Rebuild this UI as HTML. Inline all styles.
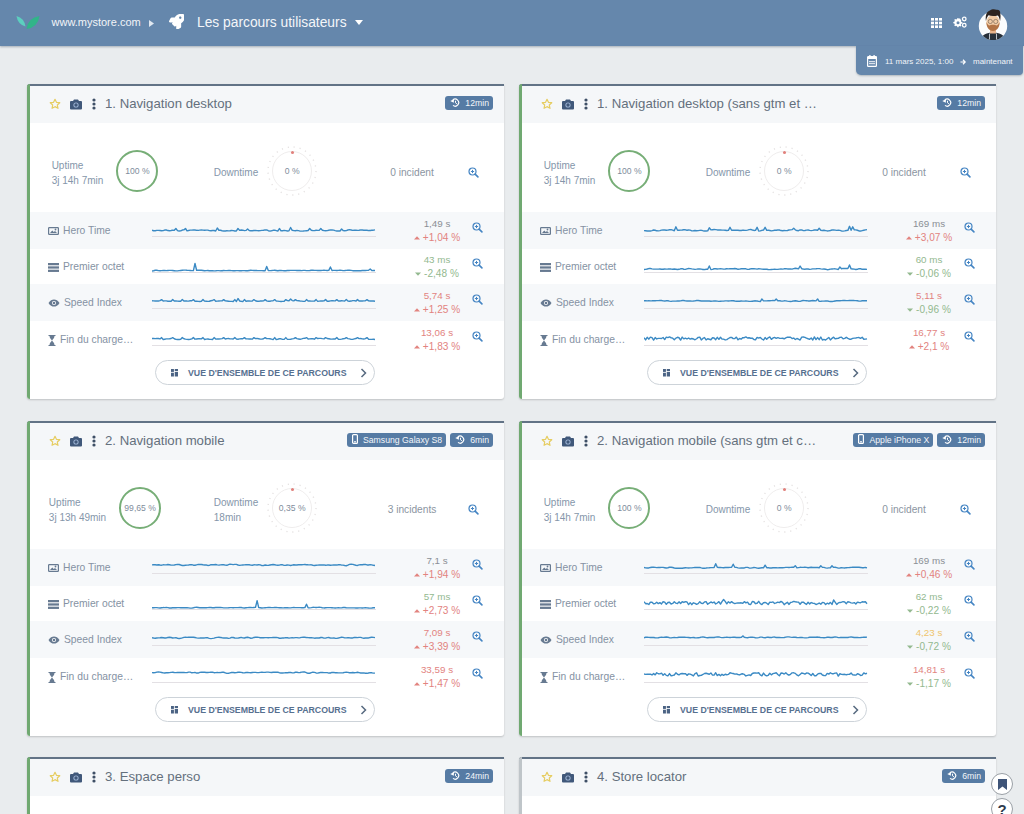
<!DOCTYPE html><html><head><meta charset="utf-8"><style>
*{margin:0;padding:0;box-sizing:border-box}
html,body{width:1024px;height:814px;overflow:hidden}
body{background:#e9ecee;font-family:"Liberation Sans", sans-serif;position:relative}
.nav{position:absolute;left:0;top:0;width:1024px;height:46px;background:#6587ac;box-shadow:0 1px 2px rgba(40,60,80,.35)}
.nav .url{position:absolute;left:51.5px;top:14px;font-size:11px;color:#f1f4f8;line-height:16px}
.nav .ntl{position:absolute;left:197px;top:12px;font-size:13.8px;color:#f4f6f9;line-height:18px}
.datep{position:absolute;left:856px;top:46px;width:167px;height:29px;background:#6587ac;border-radius:0 0 4px 5px;box-shadow:0 1px 2px rgba(40,60,80,.3)}
.datep .t{position:absolute;top:11px;font-size:8px;color:#f1f4f8;line-height:10px;white-space:nowrap}
.card{position:absolute;width:477px;height:315px;background:#fff;border-radius:3px 0 3px 3px;box-shadow:0 1px 2px rgba(0,0,0,.18);overflow:hidden}
.card>*{position:absolute}
.card>.tb{left:0;top:0;width:477px;height:2px;background:#627386;z-index:2}
.card>.lb{left:0;top:0;width:3px;height:315px;z-index:3}
.hdr{left:0;top:2px;width:477px;height:37px;background:#f5f7f9}
.hdr>*{position:absolute}
.hdr>.ctl{left:78px;top:10px;font-size:13.2px;color:#64707d;line-height:16px;white-space:nowrap}
.hdr>.bdgs{right:11px;top:10px;display:flex;gap:4px}
.bdg{display:inline-block;height:14px;line-height:14px;padding:0 4px 0 5px;background:#567ba4;color:#f3f6fa;font-size:8.7px;border-radius:3px;white-space:nowrap}
.grp{top:42px;width:300px;height:90px;display:flex;justify-content:center;align-items:center;gap:13px}
.lbl{font-size:10px;line-height:15px;color:#8596aa;white-space:nowrap;position:relative;top:1.5px}
.ring{position:relative;width:42px;height:42px;border-radius:50%;display:flex;align-items:center;justify-content:center}
.ring span{font-size:8.6px;color:#7f8d9c;white-space:nowrap;position:relative}
.ring.up{border:2px solid #77ae77}
.ring.dn{width:40px;height:40px;border:1px solid #efeded}
.ring.dn i{position:absolute;left:18px;top:-1.5px;width:3px;height:3px;border-radius:50%;background:#e1807c}
.inc{left:300px;top:43.5px;width:170px;height:90px;line-height:90px;text-align:center;font-size:10.2px;color:#8b95a1}
.zi{left:438px;width:11px;height:11px}
.zi svg{display:block}
.row{left:0;width:477px}
.row>*{position:absolute}
.mi{left:21px;top:13px;width:12px;height:11px;display:flex;align-items:center;justify-content:center}
.mi svg{display:block}
.ml{left:20.5px;top:13px;font-size:10.3px;line-height:12px;color:#8592a3;white-space:nowrap;display:flex;align-items:center}
.ml svg{display:block;margin-right:4.5px}
.sp{left:125px;top:9px}
.val{left:340px;width:140px;text-align:center;top:6px;font-size:9.8px;line-height:12px}
.chg{left:340px;width:140px;text-align:center;top:20px;font-size:10.1px;line-height:12px}
.chg .ar{font-size:6px;vertical-align:1px;margin-right:4px}
.row .zi{left:445px}
.btn{left:128px;top:276px;width:220px;height:25px;border:1px solid #cdd3d9;border-radius:13px;background:#fff}
.btn>*{position:absolute}
.bi{left:14.5px;top:8px;line-height:0}
.bt{left:32px;top:6px;font-size:8.75px;font-weight:bold;color:#56708f;line-height:12px;white-space:nowrap}
.bc{left:204px;top:7px;line-height:0}
.fab{position:absolute;left:991px;width:22px;height:22px;border-radius:50%;background:#fff;border:1px solid #9aa0a6;display:flex;align-items:center;justify-content:center}
</style></head><body>

<div class="nav">
 <svg style="position:absolute;left:16px;top:15px" width="24" height="15" viewBox="0 0 24 15"><path d="M0.5 1Q1.6 9.2 9.5 11.5Q8.4 3.3 0.5 1z" fill="#5ccfbf"/><path d="M10.5 14Q21.9 12.4 23.5 1Q12 2.6 10.5 14z" fill="#31b489"/></svg>
 <div class="url">www.mystore.com</div>
 <svg style="position:absolute;left:149px;top:19.5px" width="5" height="7" viewBox="0 0 5 7"><path d="M0 0L5 3.5 0 7z" fill="#dfe7f0"/></svg>
 <svg style="position:absolute;left:168.5px;top:13.5px" width="15" height="15" viewBox="0 0 512 512"><path fill="#fff" d="M505 19c-2-8-9-15-17-17C455-5 430-5 405-5 303-5 241 50 196 117H94c-16 0-35 11-42 26L3 241c-2 4-3 9-3 13 0 18 14 32 32 32h102l-22 22c-11 11-13 31 0 44l68 68c11 11 30 12 44 0l22-22v102c0 18 14 32 32 32 4 0 9-1 13-3l98-49c14-7 26-26 26-42V315c67-45 122-107 122-209 0-25 0-50-7-87zM384 168c-22 0-40-18-40-40s18-40 40-40 40 18 40 40-18 40-40 40z"/></svg>
 <div class="ntl" style="position:absolute;left:197px;top:13.5px;font-size:13.8px;color:#f4f6f9;line-height:18px">Les parcours utilisateurs</div>
 <svg style="position:absolute;left:355px;top:20px" width="8" height="5" viewBox="0 0 8 5"><path d="M0 0H8L4 5z" fill="#fff"/></svg>
 <svg style="position:absolute;left:931px;top:17.5px" width="11" height="10" viewBox="0 0 11 10"><g fill="#fff"><rect x="0" y="0" width="3" height="2.6"/><rect x="4" y="0" width="3" height="2.6"/><rect x="8" y="0" width="3" height="2.6"/><rect x="0" y="3.7" width="3" height="2.6"/><rect x="4" y="3.7" width="3" height="2.6"/><rect x="8" y="3.7" width="3" height="2.6"/><rect x="0" y="7.4" width="3" height="2.6"/><rect x="4" y="7.4" width="3" height="2.6"/><rect x="8" y="7.4" width="3" height="2.6"/></g></svg>
 <svg style="position:absolute;left:952.5px;top:16px" width="14" height="12" viewBox="0 0 28 24"><g fill="#fff"><path d="M9 5l2.2-.2.8 2.2 1.8 1-1 2 1 1.8 2.2.8-.2 2.2-2.2.6-.8 2 1 2-1.6 1.6-2-1-2 .8L8 22.6H5.8L5.2 20.4l-2-.8-2 1L-.4 19 .6 17l-.8-2L-2.4 14.4V12.2l2.2-.6.8-2-1-2L1.2 6l2 1 2-.8L5.8 4z" transform="translate(3 0)"/></g><circle cx="10" cy="13.3" r="3" fill="#6587ac"/><circle cx="22.5" cy="6" r="3.6" fill="none" stroke="#fff" stroke-width="2.6"/><circle cx="22.5" cy="18.5" r="3.6" fill="none" stroke="#fff" stroke-width="2.6"/></svg>
 <svg style="position:absolute;left:978px;top:6px" width="30" height="34" viewBox="0 0 30 34"><circle cx="15" cy="20" r="14.2" fill="#fbfcfd"/><clipPath id="cc"><circle cx="15" cy="20" r="14.2"/></clipPath><g clip-path="url(#cc)"><path d="M2 36c1-7 6-9.5 13-9.5s12 2.5 13 9.5z" fill="#27303a"/><path d="M11.5 27.5v6M18.5 27.5v6" stroke="#cfd6dc" stroke-width="0.9"/></g><path d="M12 22h6v5.5h-6z" fill="#e7b38b"/><ellipse cx="15" cy="16.5" rx="6.6" ry="7.6" fill="#f1cba5"/><path d="M8.4 16c0 5.5 2.7 9 6.6 9s6.6-3.5 6.6-9c-1 2.2-2 3.3-3 3.5-1.2-.9-6-.9-7.2 0-1-.2-2-1.3-3-3.5z" fill="#b27345"/><circle cx="12.3" cy="15.5" r="2.1" fill="none" stroke="#6b5a4e" stroke-width="0.6"/><circle cx="17.7" cy="15.5" r="2.1" fill="none" stroke="#6b5a4e" stroke-width="0.6"/><path d="M7.9 15c-.8-6 1-9.8 4-10.6 1.5-1.2 4.5-1.6 6.5-.6 2.5-.4 4.2 1.2 3.8 3.8.6 2 .4 4.5-.1 7.4-.6-1.8-.9-4.5-2.3-5.6-3 .9-6.8.9-9.3-.1-1.4 1.3-1.9 3.5-2.6 5.7z" fill="#2d2420"/></svg>
</div>
<div class="datep">
 <svg style="position:absolute;left:10.5px;top:9px" width="10" height="12" viewBox="0 0 20 24"><rect x="1.2" y="3.2" width="17.6" height="19.6" rx="1.5" fill="none" stroke="#fff" stroke-width="2.4"/><rect x="1" y="3" width="18" height="5" fill="#fff"/><rect x="4.5" y="0" width="2.6" height="5" fill="#fff"/><rect x="12.9" y="0" width="2.6" height="5" fill="#fff"/><g fill="#fff"><rect x="4.5" y="12" width="3" height="2.4"/><rect x="8.5" y="12" width="3" height="2.4"/><rect x="12.5" y="12" width="3" height="2.4"/><rect x="4.5" y="16" width="3" height="2.4"/><rect x="8.5" y="16" width="3" height="2.4"/><rect x="12.5" y="16" width="3" height="2.4"/></g></svg>
 <div class="t" style="left:29px">11 mars 2025, 1:00</div>
 <svg style="position:absolute;left:104px;top:12.5px" width="6" height="6" viewBox="0 0 12 12"><path d="M1 6h9M6 1.5L10.5 6 6 10.5" fill="none" stroke="#fff" stroke-width="2.4"/></svg>
 <div class="t" style="left:117px">maintenant</div>
</div>

<div class="card" style="left:27px;top:84px"><div class="tb"></div><div class="lb" style="background:#70a971"></div>
<div class="hdr"><svg width="12" height="12" viewBox="0 0 24 24" style="position:absolute;left:22px;top:11.5px"><path d="M12 2.5l2.9 6.2 6.6.7-4.9 4.6 1.4 6.6L12 17.3l-5.9 3.3 1.3-6.6-4.9-4.6 6.7-.7z" fill="none" stroke="#e6cd62" stroke-width="2.4" stroke-linejoin="round"/></svg><svg width="12" height="11" viewBox="0 0 24 22" style="position:absolute;left:43px;top:12.5px"><path d="M8 1h8l2 3h4a2 2 0 0 1 2 2v13a2 2 0 0 1-2 2H2a2 2 0 0 1-2-2V6a2 2 0 0 1 2-2h4z" fill="#40587a"/><circle cx="12" cy="12" r="5.2" fill="#9fb6d6"/><circle cx="12" cy="12" r="3.4" fill="#40587a"/></svg><svg width="4" height="12" viewBox="0 0 4 12" style="position:absolute;left:64.5px;top:11.5px"><circle cx="2" cy="2" r="1.6" fill="#3e4f66"/><circle cx="2" cy="6" r="1.6" fill="#3e4f66"/><circle cx="2" cy="10" r="1.6" fill="#3e4f66"/></svg><div class="ctl">1. Navigation desktop</div><div class="bdgs"><span class="bdg"><svg width="10" height="9" viewBox="0 0 20 18" style="vertical-align:-1px;margin-right:5px"><path d="M5.5 4.2A7 7 0 1 1 6 14.8" fill="none" stroke="#fff" stroke-width="2.4"/><path d="M0.5 6 L8 2.5 L7.5 9.5 Z" fill="#fff"/><path d="M11 5.5v4l2.8 2.2" fill="none" stroke="#fff" stroke-width="2"/></svg>12min</span></div></div>
<div class="grp" style="left:-72px"><div class="lbl">Uptime<br>3j 14h 7min</div><div class="ring up"><span>100 %</span></div></div>
<div class="grp" style="left:86px;gap:14px"><div class="lbl">Downtime</div><div class="ring dn"><svg width="52" height="52" viewBox="0 0 52 52" style="position:absolute;left:-7px;top:-7px"><circle cx="26" cy="26" r="24" fill="none" stroke="#e5e2e2" stroke-width="1.4" stroke-dasharray="1.2 4.8"/></svg><i></i><span>0 %</span></div></div>
<div class="inc">0 incident</div><div class="zi" style="top:82.5px;left:440.5px"><svg width="11" height="11" viewBox="0 0 22 22"><circle cx="9" cy="9" r="7" fill="none" stroke="#4585c3" stroke-width="2.4"/><path d="M14.2 14.2l5.6 5.6" stroke="#4585c3" stroke-width="3.2" stroke-linecap="round"/><path d="M9 5.8v6.4M5.8 9h6.4" stroke="#4585c3" stroke-width="2"/></svg></div>
<div class="row" style="top:128px;height:37px;background:#f6f8fa">
<div class="ml"><svg width="11" height="8" viewBox="0 0 22 16"><rect x="1.2" y="1.2" width="19.6" height="13.6" rx="1.5" fill="none" stroke="#677a91" stroke-width="2.4"/><path d="M4 12l4.5-5 3 3 2.5-2 4 4z" fill="#677a91"/><circle cx="15" cy="5" r="1.8" fill="#677a91"/></svg><span>Hero Time</span></div>
<svg class="sp" width="224" height="16" viewBox="0 0 224 16"><path d="M0 15.5H224" stroke="#e3e0e4" stroke-width="1"/><path d="M0.0 9.16 L1.6 9.77 L3.2 9.78 L4.8 9.40 L6.4 9.36 L8.0 9.52 L9.6 9.74 L11.2 9.65 L12.7 9.05 L14.3 9.04 L15.9 9.56 L17.5 9.71 L19.1 9.48 L20.7 9.15 L22.3 9.33 L23.9 7.50 L25.5 9.56 L27.1 9.96 L28.7 9.85 L30.3 9.04 L31.9 8.88 L33.5 7.50 L35.0 9.86 L36.6 9.46 L38.2 9.16 L39.8 9.09 L41.4 8.92 L43.0 9.01 L44.6 9.32 L46.2 9.35 L47.8 9.14 L49.4 9.01 L51.0 9.11 L52.6 9.24 L54.2 9.08 L55.8 9.13 L57.3 9.61 L58.9 9.77 L60.5 9.51 L62.1 9.50 L63.7 9.96 L65.3 7.00 L66.9 9.25 L68.5 9.28 L70.1 9.72 L71.7 9.99 L73.3 9.95 L74.9 9.77 L76.5 9.84 L78.0 9.71 L79.6 9.44 L81.2 9.66 L82.8 10.04 L84.4 9.99 L86.0 7.50 L87.6 9.37 L89.2 9.01 L90.8 9.19 L92.4 9.61 L94.0 9.41 L95.6 8.00 L97.2 9.49 L98.8 9.78 L100.3 9.69 L101.9 9.44 L103.5 9.39 L105.1 9.61 L106.7 9.76 L108.3 9.60 L109.9 9.41 L111.5 9.23 L113.1 8.87 L114.7 8.97 L116.3 9.70 L117.9 10.07 L119.5 9.75 L121.1 9.30 L122.7 9.16 L124.2 9.57 L125.8 10.06 L127.4 7.50 L129.0 9.82 L130.6 9.72 L132.2 9.43 L133.8 9.60 L135.4 9.95 L137.0 9.76 L138.6 6.50 L140.2 9.30 L141.8 9.65 L143.4 9.71 L144.9 9.39 L146.5 9.68 L148.1 10.09 L149.7 10.10 L151.3 10.03 L152.9 9.89 L154.5 9.68 L156.1 9.53 L157.7 7.50 L159.3 9.23 L160.9 9.66 L162.5 9.59 L164.1 9.26 L165.7 9.36 L167.2 9.42 L168.8 7.50 L170.4 9.31 L172.0 9.52 L173.6 9.68 L175.2 9.64 L176.8 9.30 L178.4 8.93 L180.0 8.90 L181.6 9.13 L183.2 9.59 L184.8 10.00 L186.4 10.06 L188.0 10.04 L189.6 8.00 L191.1 9.58 L192.7 9.78 L194.3 9.62 L195.9 8.99 L197.5 8.66 L199.1 8.96 L200.7 9.40 L202.3 9.21 L203.9 9.09 L205.5 9.37 L207.1 9.22 L208.7 8.89 L210.3 9.01 L211.8 9.22 L213.4 9.11 L215.0 9.24 L216.6 9.57 L218.2 9.47 L219.8 9.31 L221.4 9.18 L223.0 8.85" fill="none" stroke="#3b8ac4" stroke-width="1.4" stroke-linejoin="round"/></svg>
<div class="val" style="color:#8a8f95">1,49 s</div>
<div class="chg" style="color:#e2837f"><svg width="6" height="4" viewBox="0 0 6 4" style="margin-right:3px;vertical-align:1.5px"><path d="M0 3.5L3 0.2 6 3.5z" fill="#e2837f"/></svg>+1,04 %</div>
<div class="zi" style="top:10px"><svg width="11" height="11" viewBox="0 0 22 22"><circle cx="9" cy="9" r="7" fill="none" stroke="#4585c3" stroke-width="2.4"/><path d="M14.2 14.2l5.6 5.6" stroke="#4585c3" stroke-width="3.2" stroke-linecap="round"/><path d="M9 5.8v6.4M5.8 9h6.4" stroke="#4585c3" stroke-width="2"/></svg></div>
</div>
<div class="row" style="top:164px;height:36px;background:transparent">
<div class="ml"><svg width="11" height="9" viewBox="0 0 22 18"><rect x="0" y="0" width="22" height="4.5" fill="#677a91"/><rect x="0" y="6.7" width="22" height="4.5" fill="#677a91"/><rect x="0" y="13.4" width="22" height="4.5" fill="#677a91"/></svg><span>Premier octet</span></div>
<svg class="sp" width="224" height="16" viewBox="0 0 224 16"><path d="M0 15.5H224" stroke="#e3e0e4" stroke-width="1"/><path d="M0.0 13.95 L1.6 13.73 L3.2 13.29 L4.8 13.27 L6.4 13.62 L8.0 13.74 L9.6 13.60 L11.2 13.47 L12.7 13.53 L14.3 13.60 L15.9 13.48 L17.5 13.33 L19.1 13.35 L20.7 13.49 L22.3 13.71 L23.9 13.92 L25.5 13.86 L27.1 13.62 L28.7 13.43 L30.3 13.25 L31.9 13.09 L33.5 13.14 L35.0 13.32 L36.6 13.37 L38.2 13.49 L39.8 13.67 L41.4 13.63 L43.0 6.50 L44.6 13.26 L46.2 13.15 L47.8 13.20 L49.4 13.28 L51.0 13.54 L52.6 13.80 L54.2 13.63 L55.8 13.48 L57.3 13.69 L58.9 13.81 L60.5 13.79 L62.1 13.83 L63.7 13.81 L65.3 13.67 L66.9 13.62 L68.5 13.82 L70.1 13.77 L71.7 13.51 L73.3 13.60 L74.9 13.66 L76.5 13.54 L78.0 13.50 L79.6 13.61 L81.2 13.71 L82.8 13.69 L84.4 13.63 L86.0 13.61 L87.6 13.75 L89.2 13.79 L90.8 13.60 L92.4 13.63 L94.0 13.78 L95.6 13.71 L97.2 13.48 L98.8 13.31 L100.3 13.39 L101.9 13.47 L103.5 13.48 L105.1 13.56 L106.7 13.59 L108.3 13.60 L109.9 13.62 L111.5 13.73 L113.1 13.72 L114.7 9.50 L116.3 13.55 L117.9 13.60 L119.5 13.53 L121.1 13.35 L122.7 13.31 L124.2 13.54 L125.8 13.75 L127.4 13.56 L129.0 13.40 L130.6 13.61 L132.2 13.79 L133.8 13.68 L135.4 13.51 L137.0 13.43 L138.6 13.38 L140.2 13.41 L141.8 13.36 L143.4 13.40 L144.9 13.52 L146.5 13.40 L148.1 13.50 L149.7 13.62 L151.3 13.39 L152.9 13.39 L154.5 13.60 L156.1 13.61 L157.7 13.47 L159.3 13.29 L160.9 13.23 L162.5 13.34 L164.1 13.40 L165.7 13.45 L167.2 13.50 L168.8 13.43 L170.4 13.38 L172.0 13.26 L173.6 13.34 L175.2 13.51 L176.8 13.33 L178.4 10.00 L180.0 13.49 L181.6 13.38 L183.2 13.37 L184.8 13.54 L186.4 13.33 L188.0 13.14 L189.6 13.33 L191.1 13.58 L192.7 13.55 L194.3 13.33 L195.9 13.20 L197.5 13.21 L199.1 13.42 L200.7 13.68 L202.3 13.79 L203.9 13.82 L205.5 13.82 L207.1 13.80 L208.7 13.69 L210.3 13.47 L211.8 13.40 L213.4 13.47 L215.0 13.35 L216.6 13.24 L218.2 12.00 L219.8 13.58 L221.4 13.43 L223.0 13.47" fill="none" stroke="#3b8ac4" stroke-width="1.4" stroke-linejoin="round"/></svg>
<div class="val" style="color:#93b98f">43 ms</div>
<div class="chg" style="color:#93b98f"><svg width="6" height="4" viewBox="0 0 6 4" style="margin-right:3px;vertical-align:1.5px"><path d="M0 0.5H6L3 3.8z" fill="#93b98f"/></svg>-2,48 %</div>
<div class="zi" style="top:10px"><svg width="11" height="11" viewBox="0 0 22 22"><circle cx="9" cy="9" r="7" fill="none" stroke="#4585c3" stroke-width="2.4"/><path d="M14.2 14.2l5.6 5.6" stroke="#4585c3" stroke-width="3.2" stroke-linecap="round"/><path d="M9 5.8v6.4M5.8 9h6.4" stroke="#4585c3" stroke-width="2"/></svg></div>
</div>
<div class="row" style="top:200px;height:37px;background:#f6f8fa">
<div class="ml"><svg width="12" height="8" viewBox="0 0 24 16"><path d="M1 8C4 2.5 8 .8 12 .8S20 2.5 23 8c-3 5.5-7 7.2-11 7.2S4 13.5 1 8z" fill="#677a91"/><circle cx="12" cy="8" r="4.2" fill="#fff"/><circle cx="12" cy="8" r="2.6" fill="#677a91"/></svg><span>Speed Index</span></div>
<svg class="sp" width="224" height="16" viewBox="0 0 224 16"><path d="M0 15.5H224" stroke="#e3e0e4" stroke-width="1"/><path d="M0.0 7.74 L1.6 7.89 L3.2 7.96 L4.8 8.07 L6.4 7.97 L8.0 7.57 L9.6 6.60 L11.2 7.98 L12.7 7.86 L14.3 7.90 L15.9 8.24 L17.5 8.27 L19.1 8.22 L20.7 6.60 L22.3 7.97 L23.9 7.85 L25.5 8.10 L27.1 8.31 L28.7 8.23 L30.3 6.60 L31.9 8.05 L33.5 7.85 L35.0 8.06 L36.6 8.08 L38.2 7.73 L39.8 7.73 L41.4 6.60 L43.0 8.19 L44.6 8.28 L46.2 8.42 L47.8 8.43 L49.4 8.33 L51.0 6.60 L52.6 8.15 L54.2 8.22 L55.8 8.42 L57.3 8.28 L58.9 7.72 L60.5 7.51 L62.1 6.60 L63.7 8.20 L65.3 8.16 L66.9 8.00 L68.5 7.91 L70.1 7.90 L71.7 6.60 L73.3 7.89 L74.9 8.04 L76.5 8.23 L78.0 8.38 L79.6 8.42 L81.2 8.49 L82.8 6.60 L84.4 8.53 L86.0 5.50 L87.6 7.95 L89.2 8.30 L90.8 8.59 L92.4 6.60 L94.0 8.26 L95.6 8.07 L97.2 7.99 L98.8 8.16 L100.3 8.09 L101.9 6.60 L103.5 7.74 L105.1 8.27 L106.7 8.32 L108.3 7.99 L109.9 8.04 L111.5 7.92 L113.1 6.60 L114.7 7.83 L116.3 8.25 L117.9 8.20 L119.5 7.85 L121.1 7.76 L122.7 6.60 L124.2 7.93 L125.8 8.09 L127.4 8.38 L129.0 8.47 L130.6 8.35 L132.2 8.28 L133.8 6.60 L135.4 7.67 L137.0 7.76 L138.6 6.00 L140.2 7.59 L141.8 7.87 L143.4 6.60 L144.9 7.64 L146.5 7.69 L148.1 8.03 L149.7 8.16 L151.3 8.39 L152.9 8.40 L154.5 6.60 L156.1 7.94 L157.7 8.05 L159.3 8.14 L160.9 8.14 L162.5 8.12 L164.1 6.60 L165.7 8.35 L167.2 8.14 L168.8 8.03 L170.4 8.04 L172.0 7.82 L173.6 6.60 L175.2 8.27 L176.8 8.20 L178.4 7.87 L180.0 7.65 L181.6 7.80 L183.2 7.86 L184.8 6.60 L186.4 7.96 L188.0 7.98 L189.6 7.78 L191.1 7.92 L192.7 8.08 L194.3 6.60 L195.9 8.03 L197.5 8.18 L199.1 8.07 L200.7 7.60 L202.3 7.59 L203.9 8.13 L205.5 6.60 L207.1 7.97 L208.7 7.91 L210.3 7.99 L211.8 7.86 L213.4 7.78 L215.0 6.60 L216.6 7.88 L218.2 7.95 L219.8 7.85 L221.4 7.94 L223.0 8.24" fill="none" stroke="#3b8ac4" stroke-width="1.4" stroke-linejoin="round"/></svg>
<div class="val" style="color:#e2837f">5,74 s</div>
<div class="chg" style="color:#e2837f"><svg width="6" height="4" viewBox="0 0 6 4" style="margin-right:3px;vertical-align:1.5px"><path d="M0 3.5L3 0.2 6 3.5z" fill="#e2837f"/></svg>+1,25 %</div>
<div class="zi" style="top:10px"><svg width="11" height="11" viewBox="0 0 22 22"><circle cx="9" cy="9" r="7" fill="none" stroke="#4585c3" stroke-width="2.4"/><path d="M14.2 14.2l5.6 5.6" stroke="#4585c3" stroke-width="3.2" stroke-linecap="round"/><path d="M9 5.8v6.4M5.8 9h6.4" stroke="#4585c3" stroke-width="2"/></svg></div>
</div>
<div class="row" style="top:237px;height:36px;background:transparent">
<div class="ml"><svg width="8" height="11" viewBox="0 0 16 22"><path d="M1 1h14M1 21h14" stroke="#677a91" stroke-width="2.4"/><path d="M3 2c0 5 4 7 5 9-1 2-5 4-5 9h10c0-5-4-7-5-9 1-2 5-4 5-9z" fill="#677a91"/></svg><span>Fin du charge…</span></div>
<svg class="sp" width="224" height="16" viewBox="0 0 224 16"><path d="M0 15.5H224" stroke="#e3e0e4" stroke-width="1"/><path d="M0.0 8.52 L1.6 8.54 L3.2 8.62 L4.8 8.51 L6.4 8.48 L8.0 8.92 L9.6 7.60 L11.2 9.51 L12.7 9.22 L14.3 8.90 L15.9 8.83 L17.5 8.71 L19.1 8.49 L20.7 7.60 L22.3 8.78 L23.9 9.36 L25.5 9.56 L27.1 9.50 L28.7 9.24 L30.3 7.60 L31.9 8.78 L33.5 9.12 L35.0 9.38 L36.6 9.53 L38.2 9.28 L39.8 8.86 L41.4 7.60 L43.0 9.18 L44.6 8.94 L46.2 8.73 L47.8 8.69 L49.4 8.83 L51.0 7.60 L52.6 9.49 L54.2 9.10 L55.8 9.02 L57.3 9.28 L58.9 9.37 L60.5 9.47 L62.1 7.60 L63.7 9.11 L65.3 8.97 L66.9 9.02 L68.5 8.85 L70.1 8.62 L71.7 7.60 L73.3 8.99 L74.9 8.58 L76.5 8.50 L78.0 8.83 L79.6 8.89 L81.2 8.93 L82.8 7.60 L84.4 9.06 L86.0 9.21 L87.6 8.92 L89.2 8.69 L90.8 8.78 L92.4 7.60 L94.0 8.82 L95.6 8.89 L97.2 9.07 L98.8 8.98 L100.3 9.14 L101.9 7.60 L103.5 8.67 L105.1 8.38 L106.7 8.71 L108.3 9.15 L109.9 9.09 L111.5 8.77 L113.1 7.60 L114.7 8.66 L116.3 8.66 L117.9 8.70 L119.5 9.13 L121.1 9.58 L122.7 7.60 L124.2 9.55 L125.8 9.27 L127.4 8.71 L129.0 8.82 L130.6 9.40 L132.2 9.37 L133.8 7.60 L135.4 9.37 L137.0 9.40 L138.6 9.22 L140.2 8.84 L141.8 8.65 L143.4 7.60 L144.9 8.64 L146.5 8.94 L148.1 9.25 L149.7 8.85 L151.3 8.36 L152.9 8.31 L154.5 7.60 L156.1 9.04 L157.7 8.92 L159.3 8.62 L160.9 8.79 L162.5 9.19 L164.1 7.60 L165.7 8.56 L167.2 8.35 L168.8 8.34 L170.4 8.63 L172.0 8.87 L173.6 7.60 L175.2 8.49 L176.8 8.71 L178.4 8.99 L180.0 9.15 L181.6 8.91 L183.2 8.98 L184.8 7.60 L186.4 9.23 L188.0 9.34 L189.6 9.07 L191.1 8.75 L192.7 8.64 L194.3 7.60 L195.9 8.65 L197.5 8.92 L199.1 9.34 L200.7 9.42 L202.3 8.94 L203.9 8.53 L205.5 7.60 L207.1 8.58 L208.7 8.56 L210.3 8.82 L211.8 9.05 L213.4 8.68 L215.0 7.60 L216.6 9.19 L218.2 9.42 L219.8 9.38 L221.4 9.28 L223.0 9.44" fill="none" stroke="#3b8ac4" stroke-width="1.4" stroke-linejoin="round"/></svg>
<div class="val" style="color:#e2837f">13,06 s</div>
<div class="chg" style="color:#e2837f"><svg width="6" height="4" viewBox="0 0 6 4" style="margin-right:3px;vertical-align:1.5px"><path d="M0 3.5L3 0.2 6 3.5z" fill="#e2837f"/></svg>+1,83 %</div>
<div class="zi" style="top:10px"><svg width="11" height="11" viewBox="0 0 22 22"><circle cx="9" cy="9" r="7" fill="none" stroke="#4585c3" stroke-width="2.4"/><path d="M14.2 14.2l5.6 5.6" stroke="#4585c3" stroke-width="3.2" stroke-linecap="round"/><path d="M9 5.8v6.4M5.8 9h6.4" stroke="#4585c3" stroke-width="2"/></svg></div>
</div>
<div class="btn"><span class="bi"><svg width="7.5" height="7.5" viewBox="0 0 18 18"><rect x="0" y="0" width="7" height="7" fill="#4b6384"/><rect x="9" y="0" width="9" height="5" fill="#4b6384"/><rect x="0" y="9" width="7" height="9" fill="#4b6384"/><rect x="9" y="7" width="9" height="11" fill="#4b6384"/></svg></span><span class="bt">VUE D'ENSEMBLE DE CE PARCOURS</span><span class="bc"><svg width="7" height="10" viewBox="0 0 14 20"><path d="M3 2l8 8-8 8" fill="none" stroke="#56697f" stroke-width="3"/></svg></span></div>
</div>
<div class="card" style="left:519px;top:84px"><div class="tb"></div><div class="lb" style="background:#70a971"></div>
<div class="hdr"><svg width="12" height="12" viewBox="0 0 24 24" style="position:absolute;left:22px;top:11.5px"><path d="M12 2.5l2.9 6.2 6.6.7-4.9 4.6 1.4 6.6L12 17.3l-5.9 3.3 1.3-6.6-4.9-4.6 6.7-.7z" fill="none" stroke="#e6cd62" stroke-width="2.4" stroke-linejoin="round"/></svg><svg width="12" height="11" viewBox="0 0 24 22" style="position:absolute;left:43px;top:12.5px"><path d="M8 1h8l2 3h4a2 2 0 0 1 2 2v13a2 2 0 0 1-2 2H2a2 2 0 0 1-2-2V6a2 2 0 0 1 2-2h4z" fill="#40587a"/><circle cx="12" cy="12" r="5.2" fill="#9fb6d6"/><circle cx="12" cy="12" r="3.4" fill="#40587a"/></svg><svg width="4" height="12" viewBox="0 0 4 12" style="position:absolute;left:64.5px;top:11.5px"><circle cx="2" cy="2" r="1.6" fill="#3e4f66"/><circle cx="2" cy="6" r="1.6" fill="#3e4f66"/><circle cx="2" cy="10" r="1.6" fill="#3e4f66"/></svg><div class="ctl">1. Navigation desktop (sans gtm et …</div><div class="bdgs"><span class="bdg"><svg width="10" height="9" viewBox="0 0 20 18" style="vertical-align:-1px;margin-right:5px"><path d="M5.5 4.2A7 7 0 1 1 6 14.8" fill="none" stroke="#fff" stroke-width="2.4"/><path d="M0.5 6 L8 2.5 L7.5 9.5 Z" fill="#fff"/><path d="M11 5.5v4l2.8 2.2" fill="none" stroke="#fff" stroke-width="2"/></svg>12min</span></div></div>
<div class="grp" style="left:-72px"><div class="lbl">Uptime<br>3j 14h 7min</div><div class="ring up"><span>100 %</span></div></div>
<div class="grp" style="left:86px;gap:14px"><div class="lbl">Downtime</div><div class="ring dn"><svg width="52" height="52" viewBox="0 0 52 52" style="position:absolute;left:-7px;top:-7px"><circle cx="26" cy="26" r="24" fill="none" stroke="#e5e2e2" stroke-width="1.4" stroke-dasharray="1.2 4.8"/></svg><i></i><span>0 %</span></div></div>
<div class="inc">0 incident</div><div class="zi" style="top:82.5px;left:440.5px"><svg width="11" height="11" viewBox="0 0 22 22"><circle cx="9" cy="9" r="7" fill="none" stroke="#4585c3" stroke-width="2.4"/><path d="M14.2 14.2l5.6 5.6" stroke="#4585c3" stroke-width="3.2" stroke-linecap="round"/><path d="M9 5.8v6.4M5.8 9h6.4" stroke="#4585c3" stroke-width="2"/></svg></div>
<div class="row" style="top:128px;height:37px;background:#f6f8fa">
<div class="ml"><svg width="11" height="8" viewBox="0 0 22 16"><rect x="1.2" y="1.2" width="19.6" height="13.6" rx="1.5" fill="none" stroke="#677a91" stroke-width="2.4"/><path d="M4 12l4.5-5 3 3 2.5-2 4 4z" fill="#677a91"/><circle cx="15" cy="5" r="1.8" fill="#677a91"/></svg><span>Hero Time</span></div>
<svg class="sp" width="224" height="16" viewBox="0 0 224 16"><path d="M0 15.5H224" stroke="#e3e0e4" stroke-width="1"/><path d="M0.0 9.61 L1.6 9.75 L3.2 9.94 L4.8 10.01 L6.4 9.97 L8.0 9.61 L9.6 9.02 L11.2 9.25 L12.7 9.80 L14.3 9.87 L15.9 9.58 L17.5 9.10 L19.1 8.95 L20.7 9.05 L22.3 9.25 L23.9 9.15 L25.5 8.71 L27.1 8.66 L28.7 9.15 L30.3 9.74 L31.9 5.80 L33.5 9.24 L35.0 9.25 L36.6 9.15 L38.2 9.05 L39.8 8.74 L41.4 8.80 L43.0 9.28 L44.6 9.05 L46.2 9.11 L47.8 9.83 L49.4 9.81 L51.0 9.51 L52.6 9.68 L54.2 9.66 L55.8 9.35 L57.3 9.31 L58.9 9.69 L60.5 9.94 L62.1 10.06 L63.7 9.83 L65.3 6.80 L66.9 8.89 L68.5 8.72 L70.1 8.56 L71.7 8.59 L73.3 8.94 L74.9 9.06 L76.5 8.94 L78.0 9.15 L79.6 9.13 L81.2 9.19 L82.8 9.51 L84.4 9.35 L86.0 6.30 L87.6 9.29 L89.2 9.27 L90.8 9.20 L92.4 9.32 L94.0 9.19 L95.6 9.48 L97.2 9.53 L98.8 9.13 L100.3 9.28 L101.9 9.35 L103.5 9.07 L105.1 8.62 L106.7 8.44 L108.3 8.98 L109.9 9.44 L111.5 9.35 L113.1 6.30 L114.7 10.08 L116.3 9.88 L117.9 9.29 L119.5 9.09 L121.1 6.30 L122.7 9.39 L124.2 9.17 L125.8 9.50 L127.4 9.90 L129.0 9.58 L130.6 9.24 L132.2 9.31 L133.8 9.03 L135.4 8.99 L137.0 9.54 L138.6 9.69 L140.2 9.56 L141.8 9.67 L143.4 9.46 L144.9 9.04 L146.5 8.86 L148.1 8.67 L149.7 7.30 L151.3 8.83 L152.9 9.56 L154.5 9.72 L156.1 8.98 L157.7 8.92 L159.3 9.58 L160.9 9.53 L162.5 9.09 L164.1 9.04 L165.7 9.43 L167.2 9.65 L168.8 9.38 L170.4 8.98 L172.0 9.02 L173.6 9.26 L175.2 7.30 L176.8 9.23 L178.4 9.45 L180.0 9.22 L181.6 9.57 L183.2 9.93 L184.8 9.80 L186.4 9.46 L188.0 9.02 L189.6 8.86 L191.1 9.09 L192.7 9.37 L194.3 9.24 L195.9 9.40 L197.5 9.95 L199.1 10.14 L200.7 9.93 L202.3 9.49 L203.9 9.38 L205.5 5.30 L207.1 9.29 L208.7 5.80 L210.3 8.92 L211.8 8.84 L213.4 9.24 L215.0 9.96 L216.6 10.07 L218.2 9.66 L219.8 9.28 L221.4 8.93 L223.0 8.60" fill="none" stroke="#3b8ac4" stroke-width="1.4" stroke-linejoin="round"/></svg>
<div class="val" style="color:#8a8f95">169 ms</div>
<div class="chg" style="color:#e2837f"><svg width="6" height="4" viewBox="0 0 6 4" style="margin-right:3px;vertical-align:1.5px"><path d="M0 3.5L3 0.2 6 3.5z" fill="#e2837f"/></svg>+3,07 %</div>
<div class="zi" style="top:10px"><svg width="11" height="11" viewBox="0 0 22 22"><circle cx="9" cy="9" r="7" fill="none" stroke="#4585c3" stroke-width="2.4"/><path d="M14.2 14.2l5.6 5.6" stroke="#4585c3" stroke-width="3.2" stroke-linecap="round"/><path d="M9 5.8v6.4M5.8 9h6.4" stroke="#4585c3" stroke-width="2"/></svg></div>
</div>
<div class="row" style="top:164px;height:36px;background:transparent">
<div class="ml"><svg width="11" height="9" viewBox="0 0 22 18"><rect x="0" y="0" width="22" height="4.5" fill="#677a91"/><rect x="0" y="6.7" width="22" height="4.5" fill="#677a91"/><rect x="0" y="13.4" width="22" height="4.5" fill="#677a91"/></svg><span>Premier octet</span></div>
<svg class="sp" width="224" height="16" viewBox="0 0 224 16"><path d="M0 15.5H224" stroke="#e3e0e4" stroke-width="1"/><path d="M0.0 12.54 L1.6 12.42 L3.2 12.02 L4.8 11.55 L6.4 11.52 L8.0 11.91 L9.6 12.16 L11.2 12.16 L12.7 12.12 L14.3 12.08 L15.9 12.05 L17.5 12.27 L19.1 12.30 L20.7 12.04 L22.3 12.08 L23.9 12.04 L25.5 11.83 L27.1 12.05 L28.7 12.19 L30.3 12.06 L31.9 12.25 L33.5 12.46 L35.0 12.32 L36.6 11.82 L38.2 11.69 L39.8 12.22 L41.4 12.38 L43.0 11.91 L44.6 11.47 L46.2 11.61 L47.8 11.89 L49.4 12.08 L51.0 12.35 L52.6 12.15 L54.2 11.84 L55.8 11.94 L57.3 12.14 L58.9 12.51 L60.5 12.57 L62.1 12.26 L63.7 12.23 L65.3 9.00 L66.9 12.58 L68.5 12.35 L70.1 11.73 L71.7 11.71 L73.3 11.94 L74.9 11.91 L76.5 11.81 L78.0 11.84 L79.6 12.17 L81.2 12.02 L82.8 11.74 L84.4 11.89 L86.0 11.77 L87.6 11.63 L89.2 11.69 L90.8 11.54 L92.4 11.74 L94.0 12.29 L95.6 12.12 L97.2 11.78 L98.8 11.81 L100.3 11.62 L101.9 11.81 L103.5 12.34 L105.1 12.20 L106.7 11.82 L108.3 11.75 L109.9 11.68 L111.5 11.84 L113.1 12.08 L114.7 11.79 L116.3 11.84 L117.9 12.14 L119.5 12.24 L121.1 12.27 L122.7 12.20 L124.2 12.49 L125.8 12.65 L127.4 12.50 L129.0 12.40 L130.6 12.28 L132.2 12.41 L133.8 12.42 L135.4 12.14 L137.0 12.07 L138.6 12.13 L140.2 11.82 L141.8 11.70 L143.4 11.93 L144.9 11.89 L146.5 12.01 L148.1 12.10 L149.7 11.62 L151.3 11.25 L152.9 11.49 L154.5 11.85 L156.1 9.00 L157.7 11.70 L159.3 12.04 L160.9 12.25 L162.5 11.93 L164.1 11.98 L165.7 12.35 L167.2 12.17 L168.8 11.83 L170.4 11.86 L172.0 11.81 L173.6 11.61 L175.2 11.64 L176.8 11.91 L178.4 12.11 L180.0 12.05 L181.6 12.28 L183.2 12.69 L184.8 12.54 L186.4 12.13 L188.0 11.96 L189.6 11.84 L191.1 11.82 L192.7 12.08 L194.3 12.46 L195.9 10.00 L197.5 11.79 L199.1 11.44 L200.7 11.53 L202.3 11.37 L203.9 11.50 L205.5 8.00 L207.1 11.87 L208.7 11.96 L210.3 12.17 L211.8 12.49 L213.4 12.32 L215.0 11.63 L216.6 11.73 L218.2 12.32 L219.8 12.27 L221.4 12.11 L223.0 12.35" fill="none" stroke="#3b8ac4" stroke-width="1.4" stroke-linejoin="round"/></svg>
<div class="val" style="color:#93b98f">60 ms</div>
<div class="chg" style="color:#93b98f"><svg width="6" height="4" viewBox="0 0 6 4" style="margin-right:3px;vertical-align:1.5px"><path d="M0 0.5H6L3 3.8z" fill="#93b98f"/></svg>-0,06 %</div>
<div class="zi" style="top:10px"><svg width="11" height="11" viewBox="0 0 22 22"><circle cx="9" cy="9" r="7" fill="none" stroke="#4585c3" stroke-width="2.4"/><path d="M14.2 14.2l5.6 5.6" stroke="#4585c3" stroke-width="3.2" stroke-linecap="round"/><path d="M9 5.8v6.4M5.8 9h6.4" stroke="#4585c3" stroke-width="2"/></svg></div>
</div>
<div class="row" style="top:200px;height:37px;background:#f6f8fa">
<div class="ml"><svg width="12" height="8" viewBox="0 0 24 16"><path d="M1 8C4 2.5 8 .8 12 .8S20 2.5 23 8c-3 5.5-7 7.2-11 7.2S4 13.5 1 8z" fill="#677a91"/><circle cx="12" cy="8" r="4.2" fill="#fff"/><circle cx="12" cy="8" r="2.6" fill="#677a91"/></svg><span>Speed Index</span></div>
<svg class="sp" width="224" height="16" viewBox="0 0 224 16"><path d="M0 15.5H224" stroke="#e3e0e4" stroke-width="1"/><path d="M0.0 7.69 L1.6 7.75 L3.2 7.83 L4.8 7.77 L6.4 7.83 L8.0 7.76 L9.6 7.65 L11.2 7.69 L12.7 7.66 L14.3 7.64 L15.9 7.53 L17.5 7.54 L19.1 7.92 L20.7 8.07 L22.3 7.75 L23.9 7.72 L25.5 8.15 L27.1 8.38 L28.7 8.17 L30.3 8.12 L31.9 8.14 L33.5 7.97 L35.0 8.02 L36.6 7.85 L38.2 7.54 L39.8 7.54 L41.4 7.84 L43.0 8.04 L44.6 7.92 L46.2 7.99 L47.8 8.08 L49.4 7.98 L51.0 7.84 L52.6 7.56 L54.2 7.44 L55.8 7.70 L57.3 8.00 L58.9 7.95 L60.5 7.87 L62.1 7.98 L63.7 7.93 L65.3 7.95 L66.9 8.21 L68.5 8.15 L70.1 7.92 L71.7 7.97 L73.3 8.17 L74.9 8.35 L76.5 8.22 L78.0 8.10 L79.6 8.13 L81.2 7.87 L82.8 7.90 L84.4 8.03 L86.0 7.84 L87.6 7.71 L89.2 7.73 L90.8 8.05 L92.4 8.27 L94.0 8.28 L95.6 8.22 L97.2 8.07 L98.8 8.10 L100.3 8.16 L101.9 8.07 L103.5 8.12 L105.1 8.38 L106.7 8.42 L108.3 8.19 L109.9 7.95 L111.5 7.82 L113.1 8.04 L114.7 8.35 L116.3 8.51 L117.9 6.00 L119.5 7.92 L121.1 7.90 L122.7 7.91 L124.2 7.71 L125.8 7.69 L127.4 7.62 L129.0 7.46 L130.6 7.65 L132.2 6.00 L133.8 7.75 L135.4 7.66 L137.0 7.97 L138.6 8.08 L140.2 7.82 L141.8 7.83 L143.4 8.15 L144.9 8.40 L146.5 8.49 L148.1 8.29 L149.7 7.94 L151.3 7.81 L152.9 8.01 L154.5 8.38 L156.1 8.33 L157.7 7.80 L159.3 7.56 L160.9 7.61 L162.5 7.71 L164.1 7.93 L165.7 7.97 L167.2 7.69 L168.8 7.54 L170.4 7.72 L172.0 7.90 L173.6 6.00 L175.2 8.41 L176.8 8.30 L178.4 8.12 L180.0 8.15 L181.6 8.01 L183.2 7.89 L184.8 8.22 L186.4 8.47 L188.0 8.46 L189.6 8.30 L191.1 7.99 L192.7 7.75 L194.3 7.73 L195.9 7.80 L197.5 7.59 L199.1 7.44 L200.7 7.53 L202.3 7.61 L203.9 7.61 L205.5 7.46 L207.1 7.37 L208.7 7.44 L210.3 7.55 L211.8 7.60 L213.4 7.75 L215.0 8.14 L216.6 8.09 L218.2 7.71 L219.8 7.65 L221.4 7.76 L223.0 7.80" fill="none" stroke="#3b8ac4" stroke-width="1.4" stroke-linejoin="round"/></svg>
<div class="val" style="color:#e2837f">5,11 s</div>
<div class="chg" style="color:#93b98f"><svg width="6" height="4" viewBox="0 0 6 4" style="margin-right:3px;vertical-align:1.5px"><path d="M0 0.5H6L3 3.8z" fill="#93b98f"/></svg>-0,96 %</div>
<div class="zi" style="top:10px"><svg width="11" height="11" viewBox="0 0 22 22"><circle cx="9" cy="9" r="7" fill="none" stroke="#4585c3" stroke-width="2.4"/><path d="M14.2 14.2l5.6 5.6" stroke="#4585c3" stroke-width="3.2" stroke-linecap="round"/><path d="M9 5.8v6.4M5.8 9h6.4" stroke="#4585c3" stroke-width="2"/></svg></div>
</div>
<div class="row" style="top:237px;height:36px;background:transparent">
<div class="ml"><svg width="8" height="11" viewBox="0 0 16 22"><path d="M1 1h14M1 21h14" stroke="#677a91" stroke-width="2.4"/><path d="M3 2c0 5 4 7 5 9-1 2-5 4-5 9h10c0-5-4-7-5-9 1-2 5-4 5-9z" fill="#677a91"/></svg><span>Fin du charge…</span></div>
<svg class="sp" width="224" height="16" viewBox="0 0 224 16"><path d="M0 15.5H224" stroke="#e3e0e4" stroke-width="1"/><path d="M0.0 7.63 L1.6 9.98 L3.2 7.30 L4.8 9.16 L6.4 7.17 L8.0 7.69 L9.6 10.10 L11.2 7.57 L12.7 8.95 L14.3 8.37 L15.9 8.35 L17.5 8.48 L19.1 7.52 L20.7 9.56 L22.3 7.19 L23.9 7.65 L25.5 6.96 L27.1 7.75 L28.7 8.20 L30.3 9.79 L31.9 8.11 L33.5 7.26 L35.0 7.73 L36.6 10.07 L38.2 7.10 L39.8 8.88 L41.4 8.11 L43.0 9.01 L44.6 7.98 L46.2 9.11 L47.8 8.49 L49.4 8.98 L51.0 9.78 L52.6 8.76 L54.2 7.35 L55.8 7.11 L57.3 9.93 L58.9 8.46 L60.5 7.52 L62.1 9.93 L63.7 8.75 L65.3 9.23 L66.9 9.72 L68.5 7.81 L70.1 8.04 L71.7 9.71 L73.3 7.33 L74.9 9.35 L76.5 7.21 L78.0 9.11 L79.6 9.15 L81.2 9.94 L82.8 9.60 L84.4 8.51 L86.0 7.53 L87.6 7.38 L89.2 8.59 L90.8 8.53 L92.4 7.13 L94.0 9.79 L95.6 8.52 L97.2 9.14 L98.8 7.60 L100.3 7.68 L101.9 6.94 L103.5 8.00 L105.1 7.75 L106.7 8.25 L108.3 8.11 L109.9 9.57 L111.5 9.75 L113.1 7.46 L114.7 8.17 L116.3 7.43 L117.9 9.02 L119.5 10.02 L121.1 7.55 L122.7 9.35 L124.2 7.86 L125.8 6.94 L127.4 9.35 L129.0 7.99 L130.6 7.44 L132.2 8.29 L133.8 7.64 L135.4 8.21 L137.0 8.33 L138.6 8.24 L140.2 8.78 L141.8 7.82 L143.4 7.20 L144.9 7.17 L146.5 7.24 L148.1 8.57 L149.7 8.05 L151.3 9.48 L152.9 8.52 L154.5 9.17 L156.1 10.04 L157.7 7.10 L159.3 6.95 L160.9 7.35 L162.5 8.14 L164.1 8.74 L165.7 9.28 L167.2 8.02 L168.8 9.99 L170.4 6.91 L172.0 9.57 L173.6 7.57 L175.2 9.70 L176.8 7.01 L178.4 9.99 L180.0 9.33 L181.6 10.07 L183.2 8.76 L184.8 7.47 L186.4 10.00 L188.0 8.31 L189.6 7.17 L191.1 8.84 L192.7 8.49 L194.3 8.41 L195.9 7.39 L197.5 7.29 L199.1 8.76 L200.7 8.35 L202.3 7.30 L203.9 8.31 L205.5 9.22 L207.1 9.19 L208.7 8.41 L210.3 8.16 L211.8 8.05 L213.4 7.62 L215.0 7.53 L216.6 8.33 L218.2 7.25 L219.8 9.22 L221.4 9.17 L223.0 8.86" fill="none" stroke="#3b8ac4" stroke-width="1.4" stroke-linejoin="round"/></svg>
<div class="val" style="color:#e2837f">16,77 s</div>
<div class="chg" style="color:#e2837f"><svg width="6" height="4" viewBox="0 0 6 4" style="margin-right:3px;vertical-align:1.5px"><path d="M0 3.5L3 0.2 6 3.5z" fill="#e2837f"/></svg>+2,1 %</div>
<div class="zi" style="top:10px"><svg width="11" height="11" viewBox="0 0 22 22"><circle cx="9" cy="9" r="7" fill="none" stroke="#4585c3" stroke-width="2.4"/><path d="M14.2 14.2l5.6 5.6" stroke="#4585c3" stroke-width="3.2" stroke-linecap="round"/><path d="M9 5.8v6.4M5.8 9h6.4" stroke="#4585c3" stroke-width="2"/></svg></div>
</div>
<div class="btn"><span class="bi"><svg width="7.5" height="7.5" viewBox="0 0 18 18"><rect x="0" y="0" width="7" height="7" fill="#4b6384"/><rect x="9" y="0" width="9" height="5" fill="#4b6384"/><rect x="0" y="9" width="7" height="9" fill="#4b6384"/><rect x="9" y="7" width="9" height="11" fill="#4b6384"/></svg></span><span class="bt">VUE D'ENSEMBLE DE CE PARCOURS</span><span class="bc"><svg width="7" height="10" viewBox="0 0 14 20"><path d="M3 2l8 8-8 8" fill="none" stroke="#56697f" stroke-width="3"/></svg></span></div>
</div>
<div class="card" style="left:27px;top:421px"><div class="tb"></div><div class="lb" style="background:#70a971"></div>
<div class="hdr"><svg width="12" height="12" viewBox="0 0 24 24" style="position:absolute;left:22px;top:11.5px"><path d="M12 2.5l2.9 6.2 6.6.7-4.9 4.6 1.4 6.6L12 17.3l-5.9 3.3 1.3-6.6-4.9-4.6 6.7-.7z" fill="none" stroke="#e6cd62" stroke-width="2.4" stroke-linejoin="round"/></svg><svg width="12" height="11" viewBox="0 0 24 22" style="position:absolute;left:43px;top:12.5px"><path d="M8 1h8l2 3h4a2 2 0 0 1 2 2v13a2 2 0 0 1-2 2H2a2 2 0 0 1-2-2V6a2 2 0 0 1 2-2h4z" fill="#40587a"/><circle cx="12" cy="12" r="5.2" fill="#9fb6d6"/><circle cx="12" cy="12" r="3.4" fill="#40587a"/></svg><svg width="4" height="12" viewBox="0 0 4 12" style="position:absolute;left:64.5px;top:11.5px"><circle cx="2" cy="2" r="1.6" fill="#3e4f66"/><circle cx="2" cy="6" r="1.6" fill="#3e4f66"/><circle cx="2" cy="10" r="1.6" fill="#3e4f66"/></svg><div class="ctl">2. Navigation mobile</div><div class="bdgs"><span class="bdg"><svg width="6" height="10" viewBox="0 0 12 20" style="vertical-align:-1px;margin-right:5px"><rect x="1.2" y="1.2" width="9.6" height="17.6" rx="2" fill="none" stroke="#fff" stroke-width="2.4"/><rect x="4" y="14.5" width="4" height="2.2" fill="#fff"/></svg>Samsung Galaxy S8</span><span class="bdg"><svg width="10" height="9" viewBox="0 0 20 18" style="vertical-align:-1px;margin-right:5px"><path d="M5.5 4.2A7 7 0 1 1 6 14.8" fill="none" stroke="#fff" stroke-width="2.4"/><path d="M0.5 6 L8 2.5 L7.5 9.5 Z" fill="#fff"/><path d="M11 5.5v4l2.8 2.2" fill="none" stroke="#fff" stroke-width="2"/></svg>6min</span></div></div>
<div class="grp" style="left:-72px"><div class="lbl">Uptime<br>3j 13h 49min</div><div class="ring up"><span>99,65 %</span></div></div>
<div class="grp" style="left:86px;gap:14px"><div class="lbl">Downtime<br>18min</div><div class="ring dn"><svg width="52" height="52" viewBox="0 0 52 52" style="position:absolute;left:-7px;top:-7px"><circle cx="26" cy="26" r="24" fill="none" stroke="#e5e2e2" stroke-width="1.4" stroke-dasharray="1.2 4.8"/></svg><i></i><span>0,35 %</span></div></div>
<div class="inc">3 incidents</div><div class="zi" style="top:82.5px;left:440.5px"><svg width="11" height="11" viewBox="0 0 22 22"><circle cx="9" cy="9" r="7" fill="none" stroke="#4585c3" stroke-width="2.4"/><path d="M14.2 14.2l5.6 5.6" stroke="#4585c3" stroke-width="3.2" stroke-linecap="round"/><path d="M9 5.8v6.4M5.8 9h6.4" stroke="#4585c3" stroke-width="2"/></svg></div>
<div class="row" style="top:128px;height:37px;background:#f6f8fa">
<div class="ml"><svg width="11" height="8" viewBox="0 0 22 16"><rect x="1.2" y="1.2" width="19.6" height="13.6" rx="1.5" fill="none" stroke="#677a91" stroke-width="2.4"/><path d="M4 12l4.5-5 3 3 2.5-2 4 4z" fill="#677a91"/><circle cx="15" cy="5" r="1.8" fill="#677a91"/></svg><span>Hero Time</span></div>
<svg class="sp" width="224" height="16" viewBox="0 0 224 16"><path d="M0 15.5H224" stroke="#e3e0e4" stroke-width="1"/><path d="M0.0 6.88 L1.6 6.67 L3.2 6.76 L4.8 6.94 L6.4 6.69 L8.0 6.96 L9.6 7.19 L11.2 6.81 L12.7 6.90 L14.3 6.91 L15.9 6.54 L17.5 6.75 L19.1 7.12 L20.7 7.17 L22.3 7.03 L23.9 6.64 L25.5 6.37 L27.1 6.48 L28.7 7.02 L30.3 7.47 L31.9 7.44 L33.5 7.26 L35.0 7.14 L36.6 6.99 L38.2 6.62 L39.8 6.68 L41.4 7.18 L43.0 7.27 L44.6 6.83 L46.2 6.43 L47.8 6.42 L49.4 6.48 L51.0 6.79 L52.6 7.05 L54.2 7.05 L55.8 7.43 L57.3 7.35 L58.9 6.68 L60.5 6.65 L62.1 6.69 L63.7 6.48 L65.3 6.89 L66.9 7.17 L68.5 6.86 L70.1 6.71 L71.7 6.71 L73.3 7.09 L74.9 7.29 L76.5 6.65 L78.0 6.15 L79.6 6.36 L81.2 6.59 L82.8 6.33 L84.4 6.34 L86.0 7.00 L87.6 7.38 L89.2 7.08 L90.8 6.93 L92.4 6.88 L94.0 6.70 L95.6 6.71 L97.2 6.77 L98.8 7.17 L100.3 7.29 L101.9 6.81 L103.5 6.89 L105.1 6.96 L106.7 6.59 L108.3 6.84 L109.9 7.63 L111.5 7.56 L113.1 6.97 L114.7 7.24 L116.3 7.42 L117.9 7.02 L119.5 6.75 L121.1 6.53 L122.7 6.72 L124.2 7.15 L125.8 7.31 L127.4 7.11 L129.0 6.65 L130.6 6.82 L132.2 7.33 L133.8 7.24 L135.4 6.94 L137.0 7.12 L138.6 7.47 L140.2 7.08 L141.8 6.71 L143.4 6.97 L144.9 6.95 L146.5 6.70 L148.1 6.65 L149.7 6.71 L151.3 6.59 L152.9 6.57 L154.5 6.73 L156.1 6.81 L157.7 6.85 L159.3 6.81 L160.9 7.20 L162.5 7.45 L164.1 7.26 L165.7 7.08 L167.2 6.97 L168.8 7.07 L170.4 6.91 L172.0 6.93 L173.6 7.28 L175.2 7.07 L176.8 7.00 L178.4 7.23 L180.0 7.13 L181.6 6.94 L183.2 6.93 L184.8 7.06 L186.4 6.71 L188.0 6.67 L189.6 7.09 L191.1 7.13 L192.7 7.53 L194.3 7.76 L195.9 7.11 L197.5 6.35 L199.1 6.17 L200.7 6.43 L202.3 6.80 L203.9 7.29 L205.5 7.45 L207.1 6.91 L208.7 6.60 L210.3 6.70 L211.8 6.46 L213.4 6.43 L215.0 6.95 L216.6 7.01 L218.2 6.64 L219.8 6.84 L221.4 7.31 L223.0 7.50" fill="none" stroke="#3b8ac4" stroke-width="1.4" stroke-linejoin="round"/></svg>
<div class="val" style="color:#8a8f95">7,1 s</div>
<div class="chg" style="color:#e2837f"><svg width="6" height="4" viewBox="0 0 6 4" style="margin-right:3px;vertical-align:1.5px"><path d="M0 3.5L3 0.2 6 3.5z" fill="#e2837f"/></svg>+1,94 %</div>
<div class="zi" style="top:10px"><svg width="11" height="11" viewBox="0 0 22 22"><circle cx="9" cy="9" r="7" fill="none" stroke="#4585c3" stroke-width="2.4"/><path d="M14.2 14.2l5.6 5.6" stroke="#4585c3" stroke-width="3.2" stroke-linecap="round"/><path d="M9 5.8v6.4M5.8 9h6.4" stroke="#4585c3" stroke-width="2"/></svg></div>
</div>
<div class="row" style="top:164px;height:36px;background:transparent">
<div class="ml"><svg width="11" height="9" viewBox="0 0 22 18"><rect x="0" y="0" width="22" height="4.5" fill="#677a91"/><rect x="0" y="6.7" width="22" height="4.5" fill="#677a91"/><rect x="0" y="13.4" width="22" height="4.5" fill="#677a91"/></svg><span>Premier octet</span></div>
<svg class="sp" width="224" height="16" viewBox="0 0 224 16"><path d="M0 15.5H224" stroke="#e3e0e4" stroke-width="1"/><path d="M0.0 13.74 L1.6 13.70 L3.2 13.65 L4.8 13.65 L6.4 13.86 L8.0 13.98 L9.6 13.77 L11.2 13.57 L12.7 13.58 L14.3 13.56 L15.9 13.65 L17.5 13.99 L19.1 13.95 L20.7 13.69 L22.3 13.79 L23.9 13.81 L25.5 13.61 L27.1 13.61 L28.7 13.72 L30.3 13.77 L31.9 13.82 L33.5 13.74 L35.0 13.62 L36.6 13.86 L38.2 14.13 L39.8 14.08 L41.4 13.76 L43.0 13.38 L44.6 13.25 L46.2 13.50 L47.8 13.78 L49.4 13.68 L51.0 13.68 L52.6 13.82 L54.2 13.72 L55.8 13.66 L57.3 13.57 L58.9 13.49 L60.5 13.72 L62.1 13.81 L63.7 13.55 L65.3 13.45 L66.9 13.47 L68.5 13.45 L70.1 13.66 L71.7 13.90 L73.3 13.87 L74.9 13.84 L76.5 13.80 L78.0 13.63 L79.6 13.61 L81.2 13.68 L82.8 13.62 L84.4 13.60 L86.0 13.64 L87.6 13.48 L89.2 13.51 L90.8 13.88 L92.4 13.98 L94.0 13.76 L95.6 13.58 L97.2 13.49 L98.8 13.55 L100.3 13.62 L101.9 13.47 L103.5 13.42 L105.1 6.70 L106.7 13.56 L108.3 13.77 L109.9 13.97 L111.5 13.91 L113.1 13.72 L114.7 13.60 L116.3 13.51 L117.9 13.49 L119.5 13.64 L121.1 13.62 L122.7 13.46 L124.2 13.43 L125.8 13.59 L127.4 13.70 L129.0 13.76 L130.6 13.90 L132.2 13.81 L133.8 13.62 L135.4 13.75 L137.0 13.92 L138.6 13.84 L140.2 13.65 L141.8 13.50 L143.4 13.58 L144.9 13.65 L146.5 13.62 L148.1 13.66 L149.7 13.73 L151.3 13.74 L152.9 13.62 L154.5 10.20 L156.1 13.70 L157.7 13.90 L159.3 13.66 L160.9 13.32 L162.5 13.34 L164.1 13.48 L165.7 13.38 L167.2 13.29 L168.8 13.39 L170.4 13.70 L172.0 13.93 L173.6 13.81 L175.2 13.66 L176.8 13.66 L178.4 13.67 L180.0 13.73 L181.6 13.90 L183.2 14.00 L184.8 13.88 L186.4 13.75 L188.0 13.86 L189.6 13.86 L191.1 13.56 L192.7 13.51 L194.3 13.74 L195.9 13.86 L197.5 13.84 L199.1 13.86 L200.7 13.88 L202.3 13.85 L203.9 13.96 L205.5 13.99 L207.1 13.87 L208.7 13.92 L210.3 14.00 L211.8 13.84 L213.4 13.67 L215.0 13.86 L216.6 14.05 L218.2 14.12 L219.8 14.00 L221.4 13.76 L223.0 13.77" fill="none" stroke="#3b8ac4" stroke-width="1.4" stroke-linejoin="round"/></svg>
<div class="val" style="color:#93b98f">57 ms</div>
<div class="chg" style="color:#e2837f"><svg width="6" height="4" viewBox="0 0 6 4" style="margin-right:3px;vertical-align:1.5px"><path d="M0 3.5L3 0.2 6 3.5z" fill="#e2837f"/></svg>+2,73 %</div>
<div class="zi" style="top:10px"><svg width="11" height="11" viewBox="0 0 22 22"><circle cx="9" cy="9" r="7" fill="none" stroke="#4585c3" stroke-width="2.4"/><path d="M14.2 14.2l5.6 5.6" stroke="#4585c3" stroke-width="3.2" stroke-linecap="round"/><path d="M9 5.8v6.4M5.8 9h6.4" stroke="#4585c3" stroke-width="2"/></svg></div>
</div>
<div class="row" style="top:200px;height:37px;background:#f6f8fa">
<div class="ml"><svg width="12" height="8" viewBox="0 0 24 16"><path d="M1 8C4 2.5 8 .8 12 .8S20 2.5 23 8c-3 5.5-7 7.2-11 7.2S4 13.5 1 8z" fill="#677a91"/><circle cx="12" cy="8" r="4.2" fill="#fff"/><circle cx="12" cy="8" r="2.6" fill="#677a91"/></svg><span>Speed Index</span></div>
<svg class="sp" width="224" height="16" viewBox="0 0 224 16"><path d="M0 15.5H224" stroke="#e3e0e4" stroke-width="1"/><path d="M0.0 7.76 L1.6 8.02 L3.2 8.19 L4.8 7.96 L6.4 7.83 L8.0 7.74 L9.6 7.56 L11.2 7.73 L12.7 8.05 L14.3 7.94 L15.9 7.48 L17.5 7.26 L19.1 7.48 L20.7 7.98 L22.3 7.91 L23.9 7.69 L25.5 8.24 L27.1 8.50 L28.7 8.20 L30.3 7.82 L31.9 7.33 L33.5 7.22 L35.0 7.41 L36.6 7.28 L38.2 7.21 L39.8 7.22 L41.4 7.24 L43.0 7.53 L44.6 7.88 L46.2 8.09 L47.8 8.03 L49.4 7.93 L51.0 7.94 L52.6 7.93 L54.2 7.73 L55.8 7.81 L57.3 8.37 L58.9 8.62 L60.5 8.42 L62.1 8.06 L63.7 7.61 L65.3 7.38 L66.9 7.30 L68.5 7.44 L70.1 7.80 L71.7 7.99 L73.3 8.02 L74.9 8.06 L76.5 8.32 L78.0 8.09 L79.6 7.38 L81.2 7.50 L82.8 8.03 L84.4 8.17 L86.0 8.17 L87.6 7.73 L89.2 7.43 L90.8 7.85 L92.4 8.01 L94.0 7.53 L95.6 7.25 L97.2 7.67 L98.8 8.26 L100.3 8.07 L101.9 7.46 L103.5 7.22 L105.1 7.13 L106.7 7.36 L108.3 7.72 L109.9 7.67 L111.5 7.68 L113.1 7.64 L114.7 7.60 L116.3 7.70 L117.9 7.64 L119.5 7.59 L121.1 7.48 L122.7 7.43 L124.2 7.40 L125.8 7.68 L127.4 8.26 L129.0 8.20 L130.6 7.93 L132.2 7.93 L133.8 7.67 L135.4 7.73 L137.0 8.14 L138.6 7.91 L140.2 7.72 L141.8 7.93 L143.4 7.65 L144.9 7.58 L146.5 7.86 L148.1 7.68 L149.7 7.35 L151.3 7.14 L152.9 7.28 L154.5 7.57 L156.1 7.65 L157.7 7.72 L159.3 7.71 L160.9 7.91 L162.5 8.18 L164.1 8.03 L165.7 8.02 L167.2 8.02 L168.8 7.52 L170.4 7.53 L172.0 8.15 L173.6 8.16 L175.2 7.58 L176.8 7.52 L178.4 8.07 L180.0 8.17 L181.6 7.93 L183.2 8.24 L184.8 8.39 L186.4 8.03 L188.0 7.60 L189.6 7.20 L191.1 7.41 L192.7 7.89 L194.3 7.86 L195.9 7.76 L197.5 7.82 L199.1 8.03 L200.7 7.94 L202.3 7.51 L203.9 7.51 L205.5 7.66 L207.1 7.39 L208.7 7.39 L210.3 7.89 L211.8 8.20 L213.4 7.96 L215.0 7.84 L216.6 7.94 L218.2 7.50 L219.8 7.13 L221.4 7.35 L223.0 7.62" fill="none" stroke="#3b8ac4" stroke-width="1.4" stroke-linejoin="round"/></svg>
<div class="val" style="color:#e2837f">7,09 s</div>
<div class="chg" style="color:#e2837f"><svg width="6" height="4" viewBox="0 0 6 4" style="margin-right:3px;vertical-align:1.5px"><path d="M0 3.5L3 0.2 6 3.5z" fill="#e2837f"/></svg>+3,39 %</div>
<div class="zi" style="top:10px"><svg width="11" height="11" viewBox="0 0 22 22"><circle cx="9" cy="9" r="7" fill="none" stroke="#4585c3" stroke-width="2.4"/><path d="M14.2 14.2l5.6 5.6" stroke="#4585c3" stroke-width="3.2" stroke-linecap="round"/><path d="M9 5.8v6.4M5.8 9h6.4" stroke="#4585c3" stroke-width="2"/></svg></div>
</div>
<div class="row" style="top:237px;height:36px;background:transparent">
<div class="ml"><svg width="8" height="11" viewBox="0 0 16 22"><path d="M1 1h14M1 21h14" stroke="#677a91" stroke-width="2.4"/><path d="M3 2c0 5 4 7 5 9-1 2-5 4-5 9h10c0-5-4-7-5-9 1-2 5-4 5-9z" fill="#677a91"/></svg><span>Fin du charge…</span></div>
<svg class="sp" width="224" height="16" viewBox="0 0 224 16"><path d="M0 15.5H224" stroke="#e3e0e4" stroke-width="1"/><path d="M0.0 5.64 L1.6 5.81 L3.2 5.66 L4.8 5.13 L6.4 4.94 L8.0 5.17 L9.6 5.48 L11.2 5.86 L12.7 5.96 L14.3 5.80 L15.9 5.77 L17.5 5.61 L19.1 5.33 L20.7 5.23 L22.3 5.45 L23.9 5.61 L25.5 5.53 L27.1 5.50 L28.7 5.44 L30.3 5.50 L31.9 5.49 L33.5 5.59 L35.0 5.65 L36.6 5.12 L38.2 5.17 L39.8 5.78 L41.4 5.61 L43.0 5.46 L44.6 6.06 L46.2 6.05 L47.8 5.42 L49.4 5.19 L51.0 5.15 L52.6 5.32 L54.2 5.47 L55.8 5.44 L57.3 5.42 L58.9 5.14 L60.5 5.24 L62.1 5.69 L63.7 5.62 L65.3 5.53 L66.9 5.64 L68.5 5.57 L70.1 5.27 L71.7 5.23 L73.3 5.80 L74.9 6.34 L76.5 6.31 L78.0 5.90 L79.6 5.48 L81.2 5.50 L82.8 5.79 L84.4 5.67 L86.0 5.21 L87.6 5.13 L89.2 5.36 L90.8 5.69 L92.4 5.88 L94.0 5.53 L95.6 5.32 L97.2 5.65 L98.8 5.69 L100.3 5.46 L101.9 5.33 L103.5 5.36 L105.1 5.59 L106.7 5.62 L108.3 5.39 L109.9 5.32 L111.5 5.42 L113.1 5.42 L114.7 5.17 L116.3 5.12 L117.9 5.42 L119.5 5.45 L121.1 5.24 L122.7 5.23 L124.2 5.22 L125.8 5.26 L127.4 5.69 L129.0 5.99 L130.6 5.99 L132.2 5.85 L133.8 5.70 L135.4 5.77 L137.0 5.53 L138.6 5.37 L140.2 5.87 L141.8 5.86 L143.4 5.24 L144.9 5.29 L146.5 5.67 L148.1 5.46 L149.7 5.08 L151.3 4.83 L152.9 5.02 L154.5 5.72 L156.1 6.31 L157.7 6.27 L159.3 5.61 L160.9 5.09 L162.5 5.36 L164.1 5.93 L165.7 6.09 L167.2 5.75 L168.8 5.43 L170.4 5.49 L172.0 5.65 L173.6 5.60 L175.2 5.64 L176.8 6.07 L178.4 6.00 L180.0 5.38 L181.6 5.43 L183.2 5.74 L184.8 5.77 L186.4 5.91 L188.0 5.90 L189.6 5.88 L191.1 5.74 L192.7 5.34 L194.3 5.17 L195.9 5.37 L197.5 5.74 L199.1 5.69 L200.7 5.53 L202.3 5.75 L203.9 5.59 L205.5 5.30 L207.1 5.64 L208.7 6.03 L210.3 5.93 L211.8 5.93 L213.4 6.24 L215.0 6.32 L216.6 6.01 L218.2 5.68 L219.8 5.82 L221.4 6.13 L223.0 6.17" fill="none" stroke="#3b8ac4" stroke-width="1.4" stroke-linejoin="round"/></svg>
<div class="val" style="color:#e2837f">33,59 s</div>
<div class="chg" style="color:#e2837f"><svg width="6" height="4" viewBox="0 0 6 4" style="margin-right:3px;vertical-align:1.5px"><path d="M0 3.5L3 0.2 6 3.5z" fill="#e2837f"/></svg>+1,47 %</div>
<div class="zi" style="top:10px"><svg width="11" height="11" viewBox="0 0 22 22"><circle cx="9" cy="9" r="7" fill="none" stroke="#4585c3" stroke-width="2.4"/><path d="M14.2 14.2l5.6 5.6" stroke="#4585c3" stroke-width="3.2" stroke-linecap="round"/><path d="M9 5.8v6.4M5.8 9h6.4" stroke="#4585c3" stroke-width="2"/></svg></div>
</div>
<div class="btn"><span class="bi"><svg width="7.5" height="7.5" viewBox="0 0 18 18"><rect x="0" y="0" width="7" height="7" fill="#4b6384"/><rect x="9" y="0" width="9" height="5" fill="#4b6384"/><rect x="0" y="9" width="7" height="9" fill="#4b6384"/><rect x="9" y="7" width="9" height="11" fill="#4b6384"/></svg></span><span class="bt">VUE D'ENSEMBLE DE CE PARCOURS</span><span class="bc"><svg width="7" height="10" viewBox="0 0 14 20"><path d="M3 2l8 8-8 8" fill="none" stroke="#56697f" stroke-width="3"/></svg></span></div>
</div>
<div class="card" style="left:519px;top:421px"><div class="tb"></div><div class="lb" style="background:#70a971"></div>
<div class="hdr"><svg width="12" height="12" viewBox="0 0 24 24" style="position:absolute;left:22px;top:11.5px"><path d="M12 2.5l2.9 6.2 6.6.7-4.9 4.6 1.4 6.6L12 17.3l-5.9 3.3 1.3-6.6-4.9-4.6 6.7-.7z" fill="none" stroke="#e6cd62" stroke-width="2.4" stroke-linejoin="round"/></svg><svg width="12" height="11" viewBox="0 0 24 22" style="position:absolute;left:43px;top:12.5px"><path d="M8 1h8l2 3h4a2 2 0 0 1 2 2v13a2 2 0 0 1-2 2H2a2 2 0 0 1-2-2V6a2 2 0 0 1 2-2h4z" fill="#40587a"/><circle cx="12" cy="12" r="5.2" fill="#9fb6d6"/><circle cx="12" cy="12" r="3.4" fill="#40587a"/></svg><svg width="4" height="12" viewBox="0 0 4 12" style="position:absolute;left:64.5px;top:11.5px"><circle cx="2" cy="2" r="1.6" fill="#3e4f66"/><circle cx="2" cy="6" r="1.6" fill="#3e4f66"/><circle cx="2" cy="10" r="1.6" fill="#3e4f66"/></svg><div class="ctl">2. Navigation mobile (sans gtm et c…</div><div class="bdgs"><span class="bdg"><svg width="6" height="10" viewBox="0 0 12 20" style="vertical-align:-1px;margin-right:5px"><rect x="1.2" y="1.2" width="9.6" height="17.6" rx="2" fill="none" stroke="#fff" stroke-width="2.4"/><rect x="4" y="14.5" width="4" height="2.2" fill="#fff"/></svg>Apple iPhone X</span><span class="bdg"><svg width="10" height="9" viewBox="0 0 20 18" style="vertical-align:-1px;margin-right:5px"><path d="M5.5 4.2A7 7 0 1 1 6 14.8" fill="none" stroke="#fff" stroke-width="2.4"/><path d="M0.5 6 L8 2.5 L7.5 9.5 Z" fill="#fff"/><path d="M11 5.5v4l2.8 2.2" fill="none" stroke="#fff" stroke-width="2"/></svg>12min</span></div></div>
<div class="grp" style="left:-72px"><div class="lbl">Uptime<br>3j 14h 7min</div><div class="ring up"><span>100 %</span></div></div>
<div class="grp" style="left:86px;gap:14px"><div class="lbl">Downtime</div><div class="ring dn"><svg width="52" height="52" viewBox="0 0 52 52" style="position:absolute;left:-7px;top:-7px"><circle cx="26" cy="26" r="24" fill="none" stroke="#e5e2e2" stroke-width="1.4" stroke-dasharray="1.2 4.8"/></svg><i></i><span>0 %</span></div></div>
<div class="inc">0 incident</div><div class="zi" style="top:82.5px;left:440.5px"><svg width="11" height="11" viewBox="0 0 22 22"><circle cx="9" cy="9" r="7" fill="none" stroke="#4585c3" stroke-width="2.4"/><path d="M14.2 14.2l5.6 5.6" stroke="#4585c3" stroke-width="3.2" stroke-linecap="round"/><path d="M9 5.8v6.4M5.8 9h6.4" stroke="#4585c3" stroke-width="2"/></svg></div>
<div class="row" style="top:128px;height:37px;background:#f6f8fa">
<div class="ml"><svg width="11" height="8" viewBox="0 0 22 16"><rect x="1.2" y="1.2" width="19.6" height="13.6" rx="1.5" fill="none" stroke="#677a91" stroke-width="2.4"/><path d="M4 12l4.5-5 3 3 2.5-2 4 4z" fill="#677a91"/><circle cx="15" cy="5" r="1.8" fill="#677a91"/></svg><span>Hero Time</span></div>
<svg class="sp" width="224" height="16" viewBox="0 0 224 16"><path d="M0 15.5H224" stroke="#e3e0e4" stroke-width="1"/><path d="M0.0 9.48 L1.6 9.83 L3.2 10.06 L4.8 9.93 L6.4 9.48 L8.0 9.22 L9.6 9.20 L11.2 9.43 L12.7 9.63 L14.3 9.51 L15.9 9.46 L17.5 9.40 L19.1 9.39 L20.7 9.70 L22.3 9.99 L23.9 9.73 L25.5 9.27 L27.1 9.19 L28.7 9.48 L30.3 9.98 L31.9 10.22 L33.5 10.20 L35.0 10.18 L36.6 10.21 L38.2 10.27 L39.8 10.02 L41.4 9.76 L43.0 9.88 L44.6 9.93 L46.2 9.92 L47.8 9.83 L49.4 9.61 L51.0 9.54 L52.6 9.52 L54.2 9.37 L55.8 9.45 L57.3 9.92 L58.9 10.26 L60.5 10.28 L62.1 10.07 L63.7 9.92 L65.3 9.77 L66.9 9.58 L68.5 9.67 L70.1 9.60 L71.7 5.70 L73.3 9.34 L74.9 9.50 L76.5 9.50 L78.0 9.61 L79.6 9.73 L81.2 9.51 L82.8 9.36 L84.4 9.44 L86.0 9.38 L87.6 9.26 L89.2 6.20 L90.8 9.30 L92.4 9.37 L94.0 9.83 L95.6 10.08 L97.2 9.88 L98.8 10.00 L100.3 9.95 L101.9 9.36 L103.5 9.35 L105.1 9.94 L106.7 10.15 L108.3 9.81 L109.9 9.45 L111.5 9.64 L113.1 10.11 L114.7 10.28 L116.3 9.98 L117.9 9.73 L119.5 9.81 L121.1 7.20 L122.7 9.68 L124.2 9.68 L125.8 9.97 L127.4 10.06 L129.0 9.80 L130.6 9.61 L132.2 9.71 L133.8 9.85 L135.4 9.75 L137.0 9.72 L138.6 9.76 L140.2 9.58 L141.8 9.34 L143.4 9.42 L144.9 9.56 L146.5 9.35 L148.1 9.15 L149.7 9.30 L151.3 7.70 L152.9 9.82 L154.5 9.57 L156.1 9.32 L157.7 9.40 L159.3 9.39 L160.9 9.11 L162.5 9.34 L164.1 9.75 L165.7 9.52 L167.2 9.30 L168.8 9.47 L170.4 9.52 L172.0 9.39 L173.6 9.45 L175.2 9.72 L176.8 7.70 L178.4 9.37 L180.0 9.37 L181.6 9.82 L183.2 10.08 L184.8 9.89 L186.4 9.75 L188.0 7.70 L189.6 9.42 L191.1 9.24 L192.7 9.68 L194.3 10.12 L195.9 9.96 L197.5 9.68 L199.1 9.89 L200.7 9.96 L202.3 9.68 L203.9 9.62 L205.5 9.52 L207.1 9.35 L208.7 9.31 L210.3 9.32 L211.8 9.28 L213.4 9.23 L215.0 9.27 L216.6 9.43 L218.2 9.78 L219.8 9.68 L221.4 9.45 L223.0 9.83" fill="none" stroke="#3b8ac4" stroke-width="1.4" stroke-linejoin="round"/></svg>
<div class="val" style="color:#8a8f95">169 ms</div>
<div class="chg" style="color:#e2837f"><svg width="6" height="4" viewBox="0 0 6 4" style="margin-right:3px;vertical-align:1.5px"><path d="M0 3.5L3 0.2 6 3.5z" fill="#e2837f"/></svg>+0,46 %</div>
<div class="zi" style="top:10px"><svg width="11" height="11" viewBox="0 0 22 22"><circle cx="9" cy="9" r="7" fill="none" stroke="#4585c3" stroke-width="2.4"/><path d="M14.2 14.2l5.6 5.6" stroke="#4585c3" stroke-width="3.2" stroke-linecap="round"/><path d="M9 5.8v6.4M5.8 9h6.4" stroke="#4585c3" stroke-width="2"/></svg></div>
</div>
<div class="row" style="top:164px;height:36px;background:transparent">
<div class="ml"><svg width="11" height="9" viewBox="0 0 22 18"><rect x="0" y="0" width="22" height="4.5" fill="#677a91"/><rect x="0" y="6.7" width="22" height="4.5" fill="#677a91"/><rect x="0" y="13.4" width="22" height="4.5" fill="#677a91"/></svg><span>Premier octet</span></div>
<svg class="sp" width="224" height="16" viewBox="0 0 224 16"><path d="M0 15.5H224" stroke="#e3e0e4" stroke-width="1"/><path d="M0.0 7.66 L1.6 9.69 L3.2 9.52 L4.8 10.50 L6.4 8.22 L8.0 8.17 L9.6 9.80 L11.2 9.54 L12.7 8.33 L14.3 9.63 L15.9 8.65 L17.5 9.94 L19.1 7.70 L20.7 8.06 L22.3 10.36 L23.9 8.52 L25.5 8.19 L27.1 10.03 L28.7 9.45 L30.3 7.81 L31.9 9.17 L33.5 9.56 L35.0 7.86 L36.6 9.52 L38.2 7.72 L39.8 8.45 L41.4 7.58 L43.0 8.00 L44.6 10.63 L46.2 8.67 L47.8 10.67 L49.4 8.79 L51.0 9.37 L52.6 10.27 L54.2 9.64 L55.8 7.68 L57.3 9.30 L58.9 9.45 L60.5 7.92 L62.1 7.62 L63.7 10.27 L65.3 9.05 L66.9 7.96 L68.5 8.84 L70.1 8.04 L71.7 10.01 L73.3 9.00 L74.9 7.65 L76.5 10.08 L78.0 7.60 L79.6 5.50 L81.2 7.40 L82.8 9.82 L84.4 7.69 L86.0 9.09 L87.6 7.62 L89.2 8.93 L90.8 9.63 L92.4 9.12 L94.0 8.85 L95.6 8.95 L97.2 8.79 L98.8 9.32 L100.3 7.62 L101.9 8.91 L103.5 8.10 L105.1 10.24 L106.7 10.49 L108.3 7.53 L109.9 7.79 L111.5 9.69 L113.1 9.24 L114.7 7.36 L116.3 9.70 L117.9 10.51 L119.5 8.74 L121.1 8.48 L122.7 9.24 L124.2 10.49 L125.8 8.20 L127.4 8.33 L129.0 7.94 L130.6 9.44 L132.2 8.90 L133.8 8.17 L135.4 8.62 L137.0 7.42 L138.6 8.36 L140.2 10.64 L141.8 9.29 L143.4 8.26 L144.9 10.48 L146.5 8.52 L148.1 8.16 L149.7 7.42 L151.3 7.80 L152.9 7.98 L154.5 8.08 L156.1 10.27 L157.7 8.20 L159.3 8.15 L160.9 9.35 L162.5 10.42 L164.1 8.29 L165.7 9.89 L167.2 8.55 L168.8 9.21 L170.4 9.33 L172.0 10.50 L173.6 9.87 L175.2 9.03 L176.8 10.16 L178.4 8.55 L180.0 8.61 L181.6 10.56 L183.2 9.16 L184.8 9.93 L186.4 8.37 L188.0 10.41 L189.6 6.00 L191.1 8.14 L192.7 10.47 L194.3 8.89 L195.9 8.45 L197.5 8.19 L199.1 7.65 L200.7 7.98 L202.3 9.65 L203.9 7.78 L205.5 8.18 L207.1 8.82 L208.7 9.15 L210.3 8.59 L211.8 9.97 L213.4 8.17 L215.0 8.55 L216.6 8.75 L218.2 7.74 L219.8 8.06 L221.4 7.80 L223.0 9.77" fill="none" stroke="#3b8ac4" stroke-width="1.4" stroke-linejoin="round"/></svg>
<div class="val" style="color:#93b98f">62 ms</div>
<div class="chg" style="color:#93b98f"><svg width="6" height="4" viewBox="0 0 6 4" style="margin-right:3px;vertical-align:1.5px"><path d="M0 0.5H6L3 3.8z" fill="#93b98f"/></svg>-0,22 %</div>
<div class="zi" style="top:10px"><svg width="11" height="11" viewBox="0 0 22 22"><circle cx="9" cy="9" r="7" fill="none" stroke="#4585c3" stroke-width="2.4"/><path d="M14.2 14.2l5.6 5.6" stroke="#4585c3" stroke-width="3.2" stroke-linecap="round"/><path d="M9 5.8v6.4M5.8 9h6.4" stroke="#4585c3" stroke-width="2"/></svg></div>
</div>
<div class="row" style="top:200px;height:37px;background:#f6f8fa">
<div class="ml"><svg width="12" height="8" viewBox="0 0 24 16"><path d="M1 8C4 2.5 8 .8 12 .8S20 2.5 23 8c-3 5.5-7 7.2-11 7.2S4 13.5 1 8z" fill="#677a91"/><circle cx="12" cy="8" r="4.2" fill="#fff"/><circle cx="12" cy="8" r="2.6" fill="#677a91"/></svg><span>Speed Index</span></div>
<svg class="sp" width="224" height="16" viewBox="0 0 224 16"><path d="M0 15.5H224" stroke="#e3e0e4" stroke-width="1"/><path d="M0.0 7.72 L1.6 7.30 L3.2 7.27 L4.8 7.41 L6.4 7.45 L8.0 7.36 L9.6 7.56 L11.2 7.78 L12.7 7.89 L14.3 7.78 L15.9 7.34 L17.5 7.27 L19.1 7.41 L20.7 7.24 L22.3 7.06 L23.9 7.25 L25.5 7.69 L27.1 7.89 L28.7 7.64 L30.3 7.46 L31.9 7.60 L33.5 7.46 L35.0 7.20 L36.6 7.25 L38.2 7.18 L39.8 7.10 L41.4 7.25 L43.0 7.35 L44.6 7.55 L46.2 7.78 L47.8 7.62 L49.4 7.51 L51.0 7.79 L52.6 7.87 L54.2 7.72 L55.8 7.54 L57.3 7.09 L58.9 6.87 L60.5 7.20 L62.1 7.66 L63.7 7.76 L65.3 7.55 L66.9 7.33 L68.5 7.46 L70.1 7.53 L71.7 7.12 L73.3 6.83 L74.9 6.94 L76.5 7.34 L78.0 7.65 L79.6 7.52 L81.2 7.35 L82.8 7.25 L84.4 7.33 L86.0 7.55 L87.6 7.36 L89.2 7.10 L90.8 7.29 L92.4 7.50 L94.0 7.53 L95.6 7.56 L97.2 7.41 L98.8 5.90 L100.3 7.22 L101.9 7.64 L103.5 7.74 L105.1 7.35 L106.7 7.12 L108.3 7.22 L109.9 7.43 L111.5 7.74 L113.1 7.90 L114.7 7.64 L116.3 7.17 L117.9 7.14 L119.5 7.67 L121.1 7.73 L122.7 7.32 L124.2 7.27 L125.8 7.55 L127.4 7.57 L129.0 7.09 L130.6 7.05 L132.2 7.51 L133.8 7.56 L135.4 7.50 L137.0 7.61 L138.6 7.63 L140.2 7.48 L141.8 7.15 L143.4 6.85 L144.9 6.85 L146.5 7.16 L148.1 7.40 L149.7 7.31 L151.3 7.29 L152.9 7.50 L154.5 7.62 L156.1 7.47 L157.7 7.41 L159.3 7.66 L160.9 7.86 L162.5 7.92 L164.1 7.64 L165.7 7.26 L167.2 7.30 L168.8 7.31 L170.4 7.28 L172.0 7.25 L173.6 7.07 L175.2 7.27 L176.8 7.59 L178.4 7.60 L180.0 7.69 L181.6 7.61 L183.2 7.27 L184.8 7.24 L186.4 7.48 L188.0 7.52 L189.6 7.20 L191.1 6.92 L192.7 7.14 L194.3 7.62 L195.9 7.55 L197.5 7.32 L199.1 7.52 L200.7 7.51 L202.3 7.45 L203.9 7.49 L205.5 7.14 L207.1 6.93 L208.7 7.23 L210.3 7.53 L211.8 7.51 L213.4 7.55 L215.0 7.64 L216.6 7.57 L218.2 7.39 L219.8 7.25 L221.4 7.30 L223.0 7.14" fill="none" stroke="#3b8ac4" stroke-width="1.4" stroke-linejoin="round"/></svg>
<div class="val" style="color:#efc46c">4,23 s</div>
<div class="chg" style="color:#93b98f"><svg width="6" height="4" viewBox="0 0 6 4" style="margin-right:3px;vertical-align:1.5px"><path d="M0 0.5H6L3 3.8z" fill="#93b98f"/></svg>-0,72 %</div>
<div class="zi" style="top:10px"><svg width="11" height="11" viewBox="0 0 22 22"><circle cx="9" cy="9" r="7" fill="none" stroke="#4585c3" stroke-width="2.4"/><path d="M14.2 14.2l5.6 5.6" stroke="#4585c3" stroke-width="3.2" stroke-linecap="round"/><path d="M9 5.8v6.4M5.8 9h6.4" stroke="#4585c3" stroke-width="2"/></svg></div>
</div>
<div class="row" style="top:237px;height:36px;background:transparent">
<div class="ml"><svg width="8" height="11" viewBox="0 0 16 22"><path d="M1 1h14M1 21h14" stroke="#677a91" stroke-width="2.4"/><path d="M3 2c0 5 4 7 5 9-1 2-5 4-5 9h10c0-5-4-7-5-9 1-2 5-4 5-9z" fill="#677a91"/></svg><span>Fin du charge…</span></div>
<svg class="sp" width="224" height="16" viewBox="0 0 224 16"><path d="M0 15.5H224" stroke="#e3e0e4" stroke-width="1"/><path d="M0.0 6.93 L1.6 7.33 L3.2 7.12 L4.8 7.22 L6.4 7.09 L8.0 7.94 L9.6 6.58 L11.2 7.86 L12.7 5.73 L14.3 6.73 L15.9 6.84 L17.5 6.18 L19.1 8.23 L20.7 6.75 L22.3 8.38 L23.9 8.95 L25.5 6.56 L27.1 8.74 L28.7 8.45 L30.3 7.97 L31.9 5.79 L33.5 7.25 L35.0 7.83 L36.6 6.71 L38.2 6.46 L39.8 6.75 L41.4 6.58 L43.0 8.38 L44.6 6.88 L46.2 7.14 L47.8 7.89 L49.4 8.92 L51.0 6.70 L52.6 5.85 L54.2 9.01 L55.8 8.53 L57.3 8.39 L58.9 7.48 L60.5 6.50 L62.1 6.23 L63.7 6.73 L65.3 7.27 L66.9 5.92 L68.5 8.08 L70.1 8.17 L71.7 5.74 L73.3 8.56 L74.9 7.37 L76.5 8.82 L78.0 7.32 L79.6 8.41 L81.2 7.24 L82.8 7.78 L84.4 7.40 L86.0 5.78 L87.6 6.19 L89.2 6.49 L90.8 7.08 L92.4 6.96 L94.0 7.53 L95.6 7.94 L97.2 7.06 L98.8 6.79 L100.3 7.44 L101.9 8.94 L103.5 8.36 L105.1 7.93 L106.7 8.48 L108.3 6.47 L109.9 6.04 L111.5 6.02 L113.1 6.11 L114.7 5.73 L116.3 7.83 L117.9 8.82 L119.5 6.09 L121.1 8.04 L122.7 8.90 L124.2 8.30 L125.8 6.22 L127.4 7.87 L129.0 6.57 L130.6 6.31 L132.2 5.74 L133.8 7.49 L135.4 8.82 L137.0 6.05 L138.6 6.20 L140.2 7.02 L141.8 5.83 L143.4 7.28 L144.9 8.18 L146.5 7.27 L148.1 5.83 L149.7 5.80 L151.3 6.37 L152.9 7.97 L154.5 8.84 L156.1 7.41 L157.7 6.05 L159.3 6.43 L160.9 7.11 L162.5 6.07 L164.1 6.09 L165.7 7.18 L167.2 8.56 L168.8 6.51 L170.4 8.70 L172.0 8.68 L173.6 7.17 L175.2 6.46 L176.8 6.33 L178.4 7.97 L180.0 8.51 L181.6 8.63 L183.2 6.41 L184.8 7.15 L186.4 5.77 L188.0 6.74 L189.6 6.70 L191.1 6.12 L192.7 5.96 L194.3 9.08 L195.9 6.74 L197.5 7.40 L199.1 7.52 L200.7 7.31 L202.3 7.70 L203.9 7.41 L205.5 7.37 L207.1 5.97 L208.7 7.85 L210.3 7.97 L211.8 8.16 L213.4 6.77 L215.0 7.27 L216.6 8.44 L218.2 8.17 L219.8 5.88 L221.4 6.84 L223.0 6.28" fill="none" stroke="#3b8ac4" stroke-width="1.4" stroke-linejoin="round"/></svg>
<div class="val" style="color:#e2837f">14,81 s</div>
<div class="chg" style="color:#93b98f"><svg width="6" height="4" viewBox="0 0 6 4" style="margin-right:3px;vertical-align:1.5px"><path d="M0 0.5H6L3 3.8z" fill="#93b98f"/></svg>-1,17 %</div>
<div class="zi" style="top:10px"><svg width="11" height="11" viewBox="0 0 22 22"><circle cx="9" cy="9" r="7" fill="none" stroke="#4585c3" stroke-width="2.4"/><path d="M14.2 14.2l5.6 5.6" stroke="#4585c3" stroke-width="3.2" stroke-linecap="round"/><path d="M9 5.8v6.4M5.8 9h6.4" stroke="#4585c3" stroke-width="2"/></svg></div>
</div>
<div class="btn"><span class="bi"><svg width="7.5" height="7.5" viewBox="0 0 18 18"><rect x="0" y="0" width="7" height="7" fill="#4b6384"/><rect x="9" y="0" width="9" height="5" fill="#4b6384"/><rect x="0" y="9" width="7" height="9" fill="#4b6384"/><rect x="9" y="7" width="9" height="11" fill="#4b6384"/></svg></span><span class="bt">VUE D'ENSEMBLE DE CE PARCOURS</span><span class="bc"><svg width="7" height="10" viewBox="0 0 14 20"><path d="M3 2l8 8-8 8" fill="none" stroke="#56697f" stroke-width="3"/></svg></span></div>
</div>
<div class="card" style="left:27px;top:757px"><div class="tb"></div><div class="lb" style="background:#70a971"></div>
<div class="hdr"><svg width="12" height="12" viewBox="0 0 24 24" style="position:absolute;left:22px;top:11.5px"><path d="M12 2.5l2.9 6.2 6.6.7-4.9 4.6 1.4 6.6L12 17.3l-5.9 3.3 1.3-6.6-4.9-4.6 6.7-.7z" fill="none" stroke="#e6cd62" stroke-width="2.4" stroke-linejoin="round"/></svg><svg width="12" height="11" viewBox="0 0 24 22" style="position:absolute;left:43px;top:12.5px"><path d="M8 1h8l2 3h4a2 2 0 0 1 2 2v13a2 2 0 0 1-2 2H2a2 2 0 0 1-2-2V6a2 2 0 0 1 2-2h4z" fill="#40587a"/><circle cx="12" cy="12" r="5.2" fill="#9fb6d6"/><circle cx="12" cy="12" r="3.4" fill="#40587a"/></svg><svg width="4" height="12" viewBox="0 0 4 12" style="position:absolute;left:64.5px;top:11.5px"><circle cx="2" cy="2" r="1.6" fill="#3e4f66"/><circle cx="2" cy="6" r="1.6" fill="#3e4f66"/><circle cx="2" cy="10" r="1.6" fill="#3e4f66"/></svg><div class="ctl">3. Espace perso</div><div class="bdgs"><span class="bdg"><svg width="10" height="9" viewBox="0 0 20 18" style="vertical-align:-1px;margin-right:5px"><path d="M5.5 4.2A7 7 0 1 1 6 14.8" fill="none" stroke="#fff" stroke-width="2.4"/><path d="M0.5 6 L8 2.5 L7.5 9.5 Z" fill="#fff"/><path d="M11 5.5v4l2.8 2.2" fill="none" stroke="#fff" stroke-width="2"/></svg>24min</span></div></div>
</div>
<div class="card" style="left:519px;top:757px"><div class="tb"></div><div class="lb" style="background:#bfc5c9"></div>
<div class="hdr"><svg width="12" height="12" viewBox="0 0 24 24" style="position:absolute;left:22px;top:11.5px"><path d="M12 2.5l2.9 6.2 6.6.7-4.9 4.6 1.4 6.6L12 17.3l-5.9 3.3 1.3-6.6-4.9-4.6 6.7-.7z" fill="none" stroke="#e6cd62" stroke-width="2.4" stroke-linejoin="round"/></svg><svg width="12" height="11" viewBox="0 0 24 22" style="position:absolute;left:43px;top:12.5px"><path d="M8 1h8l2 3h4a2 2 0 0 1 2 2v13a2 2 0 0 1-2 2H2a2 2 0 0 1-2-2V6a2 2 0 0 1 2-2h4z" fill="#40587a"/><circle cx="12" cy="12" r="5.2" fill="#9fb6d6"/><circle cx="12" cy="12" r="3.4" fill="#40587a"/></svg><svg width="4" height="12" viewBox="0 0 4 12" style="position:absolute;left:64.5px;top:11.5px"><circle cx="2" cy="2" r="1.6" fill="#3e4f66"/><circle cx="2" cy="6" r="1.6" fill="#3e4f66"/><circle cx="2" cy="10" r="1.6" fill="#3e4f66"/></svg><div class="ctl">4. Store locator</div><div class="bdgs"><span class="bdg"><svg width="10" height="9" viewBox="0 0 20 18" style="vertical-align:-1px;margin-right:5px"><path d="M5.5 4.2A7 7 0 1 1 6 14.8" fill="none" stroke="#fff" stroke-width="2.4"/><path d="M0.5 6 L8 2.5 L7.5 9.5 Z" fill="#fff"/><path d="M11 5.5v4l2.8 2.2" fill="none" stroke="#fff" stroke-width="2"/></svg>6min</span></div></div>
</div>
<div class="fab" style="top:773px"><svg width="9" height="11" viewBox="0 0 9 11"><path d="M0 0H9V11L4.5 7.5 0 11z" fill="#3e5478"/></svg></div>
<div class="fab" style="top:798px"><span style="font-weight:bold;font-size:15px;color:#2f3b4d;line-height:15px;margin-top:1px">?</span></div>
</body></html>
